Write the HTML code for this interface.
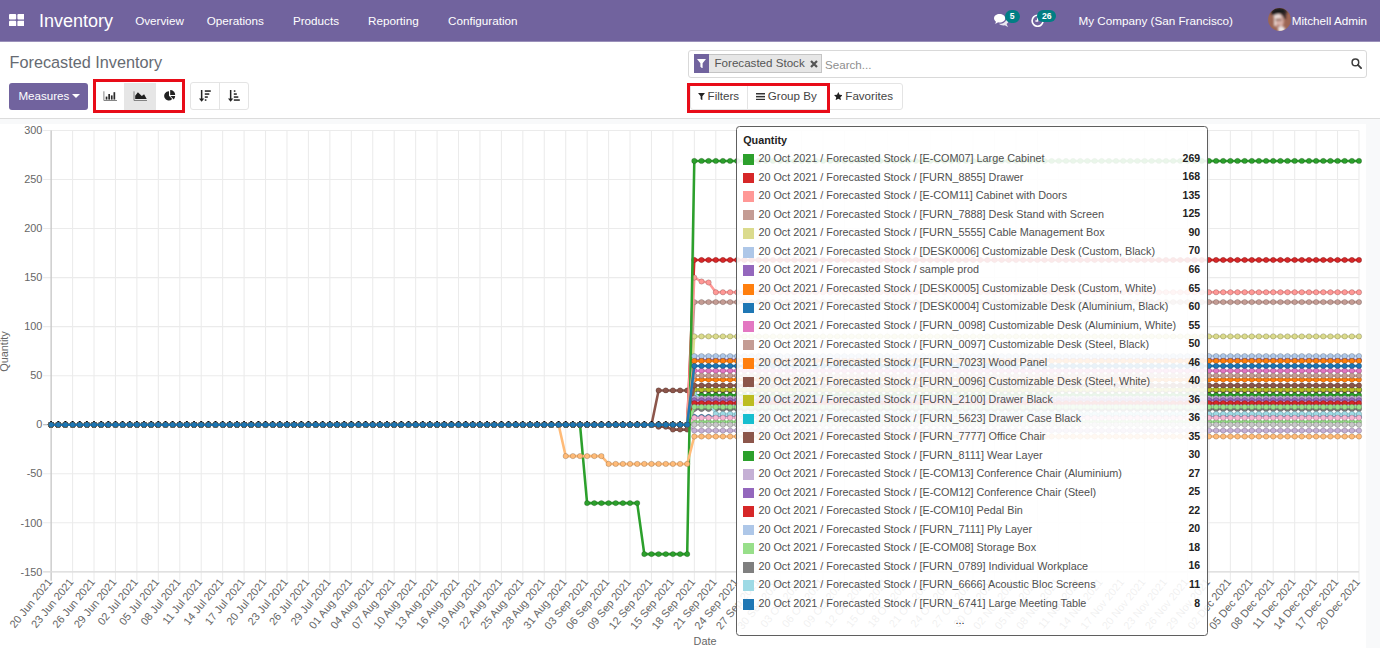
<!DOCTYPE html>
<html lang="en">
<head>
<meta charset="utf-8">
<title>Forecasted Inventory - Odoo</title>
<style>
*{box-sizing:border-box;margin:0;padding:0}
html,body{width:1380px;height:648px;overflow:hidden;background:#fff;font-family:"Liberation Sans",Arial,sans-serif;font-size:11.6px;color:#4c4c4c}
.abs{position:absolute}
#nav{position:absolute;left:0;top:0;width:1380px;height:41px;background:#71639e;box-shadow:0 1px 0 #9a90ba;color:#fff}
#nav .t{position:absolute;white-space:nowrap;line-height:14px;top:13.6px;font-size:11.7px;color:#fff}
#nav .brand{font-size:18px;top:10.8px;line-height:20px;left:39px}
.badge{position:absolute;background:#017e84;color:#fff;font-weight:bold;font-size:8.6px;line-height:13px;height:13px;border-radius:7px;text-align:center}
#cp{position:absolute;left:0;top:42px;width:1380px;height:76.5px;background:#fff;border-bottom:1px solid #dcdcdc}
#band{position:absolute;left:0;top:118.5px;width:1380px;height:5.5px;background:#f8f9fa}
#rstrip{position:absolute;left:1366px;top:118.5px;width:14px;height:530px;background:#f8f9fa}
.title{position:absolute;left:9.5px;top:53px;font-size:16.25px;line-height:18px;color:#666b72;white-space:nowrap}
.btnp{position:absolute;left:9.4px;top:82.5px;width:78.6px;height:27px;background:#71639e;border-radius:3px;color:#fff}
.btnp span{position:absolute;left:9px;top:6.3px;line-height:14px;white-space:nowrap}
.caret{position:absolute;left:62.8px;top:11.8px;width:0;height:0;border-left:4px solid transparent;border-right:4px solid transparent;border-top:4.4px solid #fff}
.redbox{position:absolute;border:3.5px solid #e80c18}
.grp{position:absolute;border:1px solid #e4e4e4;border-radius:3px;background:#fff}
.div{position:absolute;width:1px;background:#e4e4e4}
#search{position:absolute;left:688px;top:50px;width:678.8px;height:27.5px;border:1px solid #d9d9d9;border-radius:3px;background:#fff}
.facet{position:absolute;left:694px;top:53.6px;width:127.6px;height:19.8px;background:#e6e6e6;border:1px solid #c4c4c4}
.facet .ic{position:absolute;left:-1px;top:-1px;width:15.3px;height:19.8px;background:#71639e}
.facet .lb{position:absolute;left:19.5px;top:1.2px;line-height:14px;white-space:nowrap;color:#555}
.ph{position:absolute;left:825px;top:58.4px;line-height:14px;color:#8e8e8e;white-space:nowrap}
.bt{position:absolute;line-height:14px;white-space:nowrap;color:#444;top:89.4px}
#tt{position:absolute;left:736px;top:125.8px;width:471.5px;height:510.2px;border:1.2px solid #5f5f5f;border-radius:3.5px;background:rgba(255,255,255,0.9);color:#505050;font-size:10.82px}
.tt-title{position:absolute;left:6.2px;top:7.7px;font-weight:bold;color:#222;line-height:12px;font-size:10.8px}
.tt-row{position:absolute;left:0;width:100%;height:12px;line-height:12px;white-space:nowrap}
.tt-row .sq{position:absolute;left:6.2px;top:0.5px;width:10.8px;height:10.6px}
.tt-row .lb{position:absolute;left:21.4px;top:-1.6px}
.tt-row .vl{position:absolute;right:6.4px;top:-2px;font-size:10.5px;font-weight:bold;color:#222}
.tt-more{position:absolute;left:0;width:446px;text-align:center;top:487.5px;line-height:12px;color:#222}
</style>
</head>
<body>
<svg id="chart" width="1380" height="648" viewBox="0 0 1380 648" style="position:absolute;left:0;top:0">
<g stroke="#ebebeb" stroke-width="1.05">
<line x1="72.58" y1="130.4" x2="72.58" y2="580.7"/>
<line x1="94.02" y1="130.4" x2="94.02" y2="580.7"/>
<line x1="115.46" y1="130.4" x2="115.46" y2="580.7"/>
<line x1="136.90" y1="130.4" x2="136.90" y2="580.7"/>
<line x1="158.34" y1="130.4" x2="158.34" y2="580.7"/>
<line x1="179.78" y1="130.4" x2="179.78" y2="580.7"/>
<line x1="201.22" y1="130.4" x2="201.22" y2="580.7"/>
<line x1="222.66" y1="130.4" x2="222.66" y2="580.7"/>
<line x1="244.10" y1="130.4" x2="244.10" y2="580.7"/>
<line x1="265.54" y1="130.4" x2="265.54" y2="580.7"/>
<line x1="286.98" y1="130.4" x2="286.98" y2="580.7"/>
<line x1="308.42" y1="130.4" x2="308.42" y2="580.7"/>
<line x1="329.86" y1="130.4" x2="329.86" y2="580.7"/>
<line x1="351.30" y1="130.4" x2="351.30" y2="580.7"/>
<line x1="372.74" y1="130.4" x2="372.74" y2="580.7"/>
<line x1="394.19" y1="130.4" x2="394.19" y2="580.7"/>
<line x1="415.63" y1="130.4" x2="415.63" y2="580.7"/>
<line x1="437.07" y1="130.4" x2="437.07" y2="580.7"/>
<line x1="458.51" y1="130.4" x2="458.51" y2="580.7"/>
<line x1="479.95" y1="130.4" x2="479.95" y2="580.7"/>
<line x1="501.39" y1="130.4" x2="501.39" y2="580.7"/>
<line x1="522.83" y1="130.4" x2="522.83" y2="580.7"/>
<line x1="544.27" y1="130.4" x2="544.27" y2="580.7"/>
<line x1="565.71" y1="130.4" x2="565.71" y2="580.7"/>
<line x1="587.15" y1="130.4" x2="587.15" y2="580.7"/>
<line x1="608.59" y1="130.4" x2="608.59" y2="580.7"/>
<line x1="630.03" y1="130.4" x2="630.03" y2="580.7"/>
<line x1="651.47" y1="130.4" x2="651.47" y2="580.7"/>
<line x1="672.91" y1="130.4" x2="672.91" y2="580.7"/>
<line x1="694.35" y1="130.4" x2="694.35" y2="580.7"/>
<line x1="715.79" y1="130.4" x2="715.79" y2="580.7"/>
<line x1="737.23" y1="130.4" x2="737.23" y2="580.7"/>
<line x1="758.67" y1="130.4" x2="758.67" y2="580.7"/>
<line x1="780.11" y1="130.4" x2="780.11" y2="580.7"/>
<line x1="801.55" y1="130.4" x2="801.55" y2="580.7"/>
<line x1="822.99" y1="130.4" x2="822.99" y2="580.7"/>
<line x1="844.43" y1="130.4" x2="844.43" y2="580.7"/>
<line x1="865.87" y1="130.4" x2="865.87" y2="580.7"/>
<line x1="887.31" y1="130.4" x2="887.31" y2="580.7"/>
<line x1="908.75" y1="130.4" x2="908.75" y2="580.7"/>
<line x1="930.19" y1="130.4" x2="930.19" y2="580.7"/>
<line x1="951.63" y1="130.4" x2="951.63" y2="580.7"/>
<line x1="973.07" y1="130.4" x2="973.07" y2="580.7"/>
<line x1="994.51" y1="130.4" x2="994.51" y2="580.7"/>
<line x1="1015.95" y1="130.4" x2="1015.95" y2="580.7"/>
<line x1="1037.40" y1="130.4" x2="1037.40" y2="580.7"/>
<line x1="1058.84" y1="130.4" x2="1058.84" y2="580.7"/>
<line x1="1080.28" y1="130.4" x2="1080.28" y2="580.7"/>
<line x1="1101.72" y1="130.4" x2="1101.72" y2="580.7"/>
<line x1="1123.16" y1="130.4" x2="1123.16" y2="580.7"/>
<line x1="1144.60" y1="130.4" x2="1144.60" y2="580.7"/>
<line x1="1166.04" y1="130.4" x2="1166.04" y2="580.7"/>
<line x1="1187.48" y1="130.4" x2="1187.48" y2="580.7"/>
<line x1="1208.92" y1="130.4" x2="1208.92" y2="580.7"/>
<line x1="1230.36" y1="130.4" x2="1230.36" y2="580.7"/>
<line x1="1251.80" y1="130.4" x2="1251.80" y2="580.7"/>
<line x1="1273.24" y1="130.4" x2="1273.24" y2="580.7"/>
<line x1="1294.68" y1="130.4" x2="1294.68" y2="580.7"/>
<line x1="1316.12" y1="130.4" x2="1316.12" y2="580.7"/>
<line x1="1337.56" y1="130.4" x2="1337.56" y2="580.7"/>
<line x1="1359.00" y1="130.4" x2="1359.00" y2="580.7"/>
<line x1="43.1" y1="571.79" x2="1359.00" y2="571.79"/>
<line x1="43.1" y1="522.76" x2="1359.00" y2="522.76"/>
<line x1="43.1" y1="473.73" x2="1359.00" y2="473.73"/>
<line x1="43.1" y1="424.70" x2="1359.00" y2="424.70"/>
<line x1="43.1" y1="375.67" x2="1359.00" y2="375.67"/>
<line x1="43.1" y1="326.64" x2="1359.00" y2="326.64"/>
<line x1="43.1" y1="277.61" x2="1359.00" y2="277.61"/>
<line x1="43.1" y1="228.58" x2="1359.00" y2="228.58"/>
<line x1="43.1" y1="179.55" x2="1359.00" y2="179.55"/>
<line x1="43.1" y1="130.52" x2="1359.00" y2="130.52"/>
</g>
<line x1="51.14" y1="130.4" x2="51.14" y2="580.7" stroke="#c9c9c9" stroke-width="1.4"/>
<line x1="43.1" y1="571.79" x2="1359.00" y2="571.79" stroke="#dcdcdc" stroke-width="1.2"/>
<line x1="43.1" y1="424.70" x2="1359.00" y2="424.70" stroke="#c4c4c4" stroke-width="1.2"/>
<g font-family="Liberation Sans, Arial, sans-serif" font-size="10.9" fill="#666" text-anchor="end">
<text x="42.4" y="575.5">-150</text>
<text x="42.4" y="526.5">-100</text>
<text x="42.4" y="477.4">-50</text>
<text x="42.4" y="428.4">0</text>
<text x="42.4" y="379.4">50</text>
<text x="42.4" y="330.3">100</text>
<text x="42.4" y="281.3">150</text>
<text x="42.4" y="232.3">200</text>
<text x="42.4" y="183.2">250</text>
<text x="42.4" y="134.2">300</text>
</g>
<g font-family="Liberation Sans, Arial, sans-serif" font-size="10.9" fill="#666" text-anchor="end">
<text transform="translate(52.74,582.40) rotate(-50.6)">20 Jun 2021</text>
<text transform="translate(74.18,582.40) rotate(-50.6)">23 Jun 2021</text>
<text transform="translate(95.62,582.40) rotate(-50.6)">26 Jun 2021</text>
<text transform="translate(117.06,582.40) rotate(-50.6)">29 Jun 2021</text>
<text transform="translate(138.50,582.40) rotate(-50.6)">02 Jul 2021</text>
<text transform="translate(159.94,582.40) rotate(-50.6)">05 Jul 2021</text>
<text transform="translate(181.38,582.40) rotate(-50.6)">08 Jul 2021</text>
<text transform="translate(202.82,582.40) rotate(-50.6)">11 Jul 2021</text>
<text transform="translate(224.26,582.40) rotate(-50.6)">14 Jul 2021</text>
<text transform="translate(245.70,582.40) rotate(-50.6)">17 Jul 2021</text>
<text transform="translate(267.14,582.40) rotate(-50.6)">20 Jul 2021</text>
<text transform="translate(288.58,582.40) rotate(-50.6)">23 Jul 2021</text>
<text transform="translate(310.02,582.40) rotate(-50.6)">26 Jul 2021</text>
<text transform="translate(331.46,582.40) rotate(-50.6)">29 Jul 2021</text>
<text transform="translate(352.90,582.40) rotate(-50.6)">01 Aug 2021</text>
<text transform="translate(374.34,582.40) rotate(-50.6)">04 Aug 2021</text>
<text transform="translate(395.79,582.40) rotate(-50.6)">07 Aug 2021</text>
<text transform="translate(417.23,582.40) rotate(-50.6)">10 Aug 2021</text>
<text transform="translate(438.67,582.40) rotate(-50.6)">13 Aug 2021</text>
<text transform="translate(460.11,582.40) rotate(-50.6)">16 Aug 2021</text>
<text transform="translate(481.55,582.40) rotate(-50.6)">19 Aug 2021</text>
<text transform="translate(502.99,582.40) rotate(-50.6)">22 Aug 2021</text>
<text transform="translate(524.43,582.40) rotate(-50.6)">25 Aug 2021</text>
<text transform="translate(545.87,582.40) rotate(-50.6)">28 Aug 2021</text>
<text transform="translate(567.31,582.40) rotate(-50.6)">31 Aug 2021</text>
<text transform="translate(588.75,582.40) rotate(-50.6)">03 Sep 2021</text>
<text transform="translate(610.19,582.40) rotate(-50.6)">06 Sep 2021</text>
<text transform="translate(631.63,582.40) rotate(-50.6)">09 Sep 2021</text>
<text transform="translate(653.07,582.40) rotate(-50.6)">12 Sep 2021</text>
<text transform="translate(674.51,582.40) rotate(-50.6)">15 Sep 2021</text>
<text transform="translate(695.95,582.40) rotate(-50.6)">18 Sep 2021</text>
<text transform="translate(717.39,582.40) rotate(-50.6)">21 Sep 2021</text>
<text transform="translate(738.83,582.40) rotate(-50.6)">24 Sep 2021</text>
<text transform="translate(760.27,582.40) rotate(-50.6)">27 Sep 2021</text>
<text transform="translate(781.71,582.40) rotate(-50.6)">30 Sep 2021</text>
<text transform="translate(803.15,582.40) rotate(-50.6)">03 Oct 2021</text>
<text transform="translate(824.59,582.40) rotate(-50.6)">06 Oct 2021</text>
<text transform="translate(846.03,582.40) rotate(-50.6)">09 Oct 2021</text>
<text transform="translate(867.47,582.40) rotate(-50.6)">12 Oct 2021</text>
<text transform="translate(888.91,582.40) rotate(-50.6)">15 Oct 2021</text>
<text transform="translate(910.35,582.40) rotate(-50.6)">18 Oct 2021</text>
<text transform="translate(931.79,582.40) rotate(-50.6)">21 Oct 2021</text>
<text transform="translate(953.23,582.40) rotate(-50.6)">24 Oct 2021</text>
<text transform="translate(974.67,582.40) rotate(-50.6)">27 Oct 2021</text>
<text transform="translate(996.11,582.40) rotate(-50.6)">30 Oct 2021</text>
<text transform="translate(1017.55,582.40) rotate(-50.6)">02 Nov 2021</text>
<text transform="translate(1039.00,582.40) rotate(-50.6)">05 Nov 2021</text>
<text transform="translate(1060.44,582.40) rotate(-50.6)">08 Nov 2021</text>
<text transform="translate(1081.88,582.40) rotate(-50.6)">11 Nov 2021</text>
<text transform="translate(1103.32,582.40) rotate(-50.6)">14 Nov 2021</text>
<text transform="translate(1124.76,582.40) rotate(-50.6)">17 Nov 2021</text>
<text transform="translate(1146.20,582.40) rotate(-50.6)">20 Nov 2021</text>
<text transform="translate(1167.64,582.40) rotate(-50.6)">23 Nov 2021</text>
<text transform="translate(1189.08,582.40) rotate(-50.6)">26 Nov 2021</text>
<text transform="translate(1210.52,582.40) rotate(-50.6)">29 Nov 2021</text>
<text transform="translate(1231.96,582.40) rotate(-50.6)">02 Dec 2021</text>
<text transform="translate(1253.40,582.40) rotate(-50.6)">05 Dec 2021</text>
<text transform="translate(1274.84,582.40) rotate(-50.6)">08 Dec 2021</text>
<text transform="translate(1296.28,582.40) rotate(-50.6)">11 Dec 2021</text>
<text transform="translate(1317.72,582.40) rotate(-50.6)">14 Dec 2021</text>
<text transform="translate(1339.16,582.40) rotate(-50.6)">17 Dec 2021</text>
<text transform="translate(1360.60,582.40) rotate(-50.6)">20 Dec 2021</text>
</g>
<text font-family="Liberation Sans, Arial, sans-serif" font-size="10.9" fill="#666" text-anchor="middle" transform="translate(7.6,351.5) rotate(-90)">Quantity</text>
<text font-family="Liberation Sans, Arial, sans-serif" font-size="10.85" fill="#666" text-anchor="middle" x="705" y="645.2">Date</text>
<defs>
<marker id="m0" markerUnits="userSpaceOnUse" markerWidth="8" markerHeight="8" refX="4" refY="4" viewBox="0 0 8 8"><circle cx="4" cy="4" r="2.68" fill="#1f77b4" stroke="rgba(0,0,0,0.2)" stroke-width="0.9"/></marker>
<marker id="m1" markerUnits="userSpaceOnUse" markerWidth="8" markerHeight="8" refX="4" refY="4" viewBox="0 0 8 8"><circle cx="4" cy="4" r="2.68" fill="#ff7f0e" stroke="rgba(0,0,0,0.2)" stroke-width="0.9"/></marker>
<marker id="m2" markerUnits="userSpaceOnUse" markerWidth="8" markerHeight="8" refX="4" refY="4" viewBox="0 0 8 8"><circle cx="4" cy="4" r="2.68" fill="#aec7e8" stroke="rgba(0,0,0,0.2)" stroke-width="0.9"/></marker>
<marker id="m3" markerUnits="userSpaceOnUse" markerWidth="8" markerHeight="8" refX="4" refY="4" viewBox="0 0 8 8"><circle cx="4" cy="4" r="2.68" fill="#ffbb78" stroke="rgba(0,0,0,0.2)" stroke-width="0.9"/></marker>
<marker id="m4" markerUnits="userSpaceOnUse" markerWidth="8" markerHeight="8" refX="4" refY="4" viewBox="0 0 8 8"><circle cx="4" cy="4" r="2.68" fill="#2ca02c" stroke="rgba(0,0,0,0.2)" stroke-width="0.9"/></marker>
<marker id="m5" markerUnits="userSpaceOnUse" markerWidth="8" markerHeight="8" refX="4" refY="4" viewBox="0 0 8 8"><circle cx="4" cy="4" r="2.68" fill="#98df8a" stroke="rgba(0,0,0,0.2)" stroke-width="0.9"/></marker>
<marker id="m6" markerUnits="userSpaceOnUse" markerWidth="8" markerHeight="8" refX="4" refY="4" viewBox="0 0 8 8"><circle cx="4" cy="4" r="2.68" fill="#d62728" stroke="rgba(0,0,0,0.2)" stroke-width="0.9"/></marker>
<marker id="m7" markerUnits="userSpaceOnUse" markerWidth="8" markerHeight="8" refX="4" refY="4" viewBox="0 0 8 8"><circle cx="4" cy="4" r="2.68" fill="#ff9896" stroke="rgba(0,0,0,0.2)" stroke-width="0.9"/></marker>
<marker id="m8" markerUnits="userSpaceOnUse" markerWidth="8" markerHeight="8" refX="4" refY="4" viewBox="0 0 8 8"><circle cx="4" cy="4" r="2.68" fill="#9467bd" stroke="rgba(0,0,0,0.2)" stroke-width="0.9"/></marker>
<marker id="m9" markerUnits="userSpaceOnUse" markerWidth="8" markerHeight="8" refX="4" refY="4" viewBox="0 0 8 8"><circle cx="4" cy="4" r="2.68" fill="#c5b0d5" stroke="rgba(0,0,0,0.2)" stroke-width="0.9"/></marker>
<marker id="m10" markerUnits="userSpaceOnUse" markerWidth="8" markerHeight="8" refX="4" refY="4" viewBox="0 0 8 8"><circle cx="4" cy="4" r="2.68" fill="#8c564b" stroke="rgba(0,0,0,0.2)" stroke-width="0.9"/></marker>
<marker id="m11" markerUnits="userSpaceOnUse" markerWidth="8" markerHeight="8" refX="4" refY="4" viewBox="0 0 8 8"><circle cx="4" cy="4" r="2.68" fill="#c49c94" stroke="rgba(0,0,0,0.2)" stroke-width="0.9"/></marker>
<marker id="m12" markerUnits="userSpaceOnUse" markerWidth="8" markerHeight="8" refX="4" refY="4" viewBox="0 0 8 8"><circle cx="4" cy="4" r="2.68" fill="#e377c2" stroke="rgba(0,0,0,0.2)" stroke-width="0.9"/></marker>
<marker id="m13" markerUnits="userSpaceOnUse" markerWidth="8" markerHeight="8" refX="4" refY="4" viewBox="0 0 8 8"><circle cx="4" cy="4" r="2.68" fill="#f7b6d2" stroke="rgba(0,0,0,0.2)" stroke-width="0.9"/></marker>
<marker id="m14" markerUnits="userSpaceOnUse" markerWidth="8" markerHeight="8" refX="4" refY="4" viewBox="0 0 8 8"><circle cx="4" cy="4" r="2.68" fill="#7f7f7f" stroke="rgba(0,0,0,0.2)" stroke-width="0.9"/></marker>
<marker id="m15" markerUnits="userSpaceOnUse" markerWidth="8" markerHeight="8" refX="4" refY="4" viewBox="0 0 8 8"><circle cx="4" cy="4" r="2.68" fill="#c7c7c7" stroke="rgba(0,0,0,0.2)" stroke-width="0.9"/></marker>
<marker id="m16" markerUnits="userSpaceOnUse" markerWidth="8" markerHeight="8" refX="4" refY="4" viewBox="0 0 8 8"><circle cx="4" cy="4" r="2.68" fill="#bcbd22" stroke="rgba(0,0,0,0.2)" stroke-width="0.9"/></marker>
<marker id="m17" markerUnits="userSpaceOnUse" markerWidth="8" markerHeight="8" refX="4" refY="4" viewBox="0 0 8 8"><circle cx="4" cy="4" r="2.68" fill="#dbdb8d" stroke="rgba(0,0,0,0.2)" stroke-width="0.9"/></marker>
<marker id="m18" markerUnits="userSpaceOnUse" markerWidth="8" markerHeight="8" refX="4" refY="4" viewBox="0 0 8 8"><circle cx="4" cy="4" r="2.68" fill="#17becf" stroke="rgba(0,0,0,0.2)" stroke-width="0.9"/></marker>
<marker id="m19" markerUnits="userSpaceOnUse" markerWidth="8" markerHeight="8" refX="4" refY="4" viewBox="0 0 8 8"><circle cx="4" cy="4" r="2.68" fill="#9edae5" stroke="rgba(0,0,0,0.2)" stroke-width="0.9"/></marker>
</defs>
<polyline points="51.1,424.7 58.3,424.7 65.4,424.7 72.6,424.7 79.7,424.7 86.9,424.7 94,424.7 101.2,424.7 108.3,424.7 115.5,424.7 122.6,424.7 129.8,424.7 136.9,424.7 144,424.7 151.2,424.7 158.3,424.7 165.5,424.7 172.6,424.7 179.8,424.7 186.9,424.7 194.1,424.7 201.2,424.7 208.4,424.7 215.5,424.7 222.7,424.7 229.8,424.7 237,424.7 244.1,424.7 251.2,424.7 258.4,424.7 265.5,424.7 272.7,424.7 279.8,424.7 287,424.7 294.1,424.7 301.3,424.7 308.4,424.7 315.6,424.7 322.7,424.7 329.9,424.7 337,424.7 344.2,424.7 351.3,424.7 358.5,424.7 365.6,424.7 372.7,424.7 379.9,424.7 387,424.7 394.2,424.7 401.3,424.7 408.5,424.7 415.6,424.7 422.8,424.7 429.9,424.7 437.1,424.7 444.2,424.7 451.4,424.7 458.5,424.7 465.7,424.7 472.8,424.7 479.9,424.7 487.1,424.7 494.2,424.7 501.4,424.7 508.5,424.7 515.7,424.7 522.8,424.7 530,424.7 537.1,424.7 544.3,424.7 551.4,424.7 558.6,424.7 565.7,424.7 572.9,424.7 580,424.7 587.1,424.7 594.3,424.7 601.4,424.7 608.6,424.7 615.7,424.7 622.9,424.7 630,424.7 637.2,424.7 644.3,424.7 651.5,424.7 658.6,424.7 665.8,424.7 672.9,424.7 680.1,424.7 687.2,424.7 694.3,409 701.5,409 708.6,409 715.8,409 722.9,409 730.1,409 737.2,409 744.4,409 751.5,409 758.7,409 765.8,409 773,409 780.1,409 787.3,409 794.4,409 801.6,409 808.7,409 815.8,409 823,409 830.1,409 837.3,409 844.4,409 851.6,409 858.7,409 865.9,409 873,409 880.2,409 887.3,409 894.5,409 901.6,409 908.8,409 915.9,409 923,409 930.2,409 937.3,409 944.5,409 951.6,409 958.8,409 965.9,409 973.1,409 980.2,409 987.4,409 994.5,409 1001.7,409 1008.8,409 1016,409 1023.1,409 1030.2,409 1037.4,409 1044.5,409 1051.7,409 1058.8,409 1066,409 1073.1,409 1080.3,409 1087.4,409 1094.6,409 1101.7,409 1108.9,409 1116,409 1123.2,409 1130.3,409 1137.4,409 1144.6,409 1151.7,409 1158.9,409 1166,409 1173.2,409 1180.3,409 1187.5,409 1194.6,409 1201.8,409 1208.9,409 1216.1,409 1223.2,409 1230.4,409 1237.5,409 1244.7,409 1251.8,409 1258.9,409 1266.1,409 1273.2,409 1280.4,409 1287.5,409 1294.7,409 1301.8,409 1309,409 1316.1,409 1323.3,409 1330.4,409 1337.6,409 1344.7,409 1351.9,409 1359,409" fill="none" stroke="#7f7f7f" stroke-width="2.55" stroke-linejoin="round" marker-start="url(#m14)" marker-mid="url(#m14)" marker-end="url(#m14)"/>
<polyline points="51.1,424.7 58.3,424.7 65.4,424.7 72.6,424.7 79.7,424.7 86.9,424.7 94,424.7 101.2,424.7 108.3,424.7 115.5,424.7 122.6,424.7 129.8,424.7 136.9,424.7 144,424.7 151.2,424.7 158.3,424.7 165.5,424.7 172.6,424.7 179.8,424.7 186.9,424.7 194.1,424.7 201.2,424.7 208.4,424.7 215.5,424.7 222.7,424.7 229.8,424.7 237,424.7 244.1,424.7 251.2,424.7 258.4,424.7 265.5,424.7 272.7,424.7 279.8,424.7 287,424.7 294.1,424.7 301.3,424.7 308.4,424.7 315.6,424.7 322.7,424.7 329.9,424.7 337,424.7 344.2,424.7 351.3,424.7 358.5,424.7 365.6,424.7 372.7,424.7 379.9,424.7 387,424.7 394.2,424.7 401.3,424.7 408.5,424.7 415.6,424.7 422.8,424.7 429.9,424.7 437.1,424.7 444.2,424.7 451.4,424.7 458.5,424.7 465.7,424.7 472.8,424.7 479.9,424.7 487.1,424.7 494.2,424.7 501.4,424.7 508.5,424.7 515.7,424.7 522.8,424.7 530,424.7 537.1,424.7 544.3,424.7 551.4,424.7 558.6,424.7 565.7,424.7 572.9,424.7 580,424.7 587.1,424.7 594.3,424.7 601.4,424.7 608.6,424.7 615.7,424.7 622.9,424.7 630,424.7 637.2,424.7 644.3,424.7 651.5,424.7 658.6,424.7 665.8,424.7 672.9,424.7 680.1,424.7 687.2,424.7 694.3,302.1 701.5,302.1 708.6,302.1 715.8,302.1 722.9,302.1 730.1,302.1 737.2,302.1 744.4,302.1 751.5,302.1 758.7,302.1 765.8,302.1 773,302.1 780.1,302.1 787.3,302.1 794.4,302.1 801.6,302.1 808.7,302.1 815.8,302.1 823,302.1 830.1,302.1 837.3,302.1 844.4,302.1 851.6,302.1 858.7,302.1 865.9,302.1 873,302.1 880.2,302.1 887.3,302.1 894.5,302.1 901.6,302.1 908.8,302.1 915.9,302.1 923,302.1 930.2,302.1 937.3,302.1 944.5,302.1 951.6,302.1 958.8,302.1 965.9,302.1 973.1,302.1 980.2,302.1 987.4,302.1 994.5,302.1 1001.7,302.1 1008.8,302.1 1016,302.1 1023.1,302.1 1030.2,302.1 1037.4,302.1 1044.5,302.1 1051.7,302.1 1058.8,302.1 1066,302.1 1073.1,302.1 1080.3,302.1 1087.4,302.1 1094.6,302.1 1101.7,302.1 1108.9,302.1 1116,302.1 1123.2,302.1 1130.3,302.1 1137.4,302.1 1144.6,302.1 1151.7,302.1 1158.9,302.1 1166,302.1 1173.2,302.1 1180.3,302.1 1187.5,302.1 1194.6,302.1 1201.8,302.1 1208.9,302.1 1216.1,302.1 1223.2,302.1 1230.4,302.1 1237.5,302.1 1244.7,302.1 1251.8,302.1 1258.9,302.1 1266.1,302.1 1273.2,302.1 1280.4,302.1 1287.5,302.1 1294.7,302.1 1301.8,302.1 1309,302.1 1316.1,302.1 1323.3,302.1 1330.4,302.1 1337.6,302.1 1344.7,302.1 1351.9,302.1 1359,302.1" fill="none" stroke="#c49c94" stroke-width="2.55" stroke-linejoin="round" marker-start="url(#m11)" marker-mid="url(#m11)" marker-end="url(#m11)"/>
<polyline points="51.1,424.7 58.3,424.7 65.4,424.7 72.6,424.7 79.7,424.7 86.9,424.7 94,424.7 101.2,424.7 108.3,424.7 115.5,424.7 122.6,424.7 129.8,424.7 136.9,424.7 144,424.7 151.2,424.7 158.3,424.7 165.5,424.7 172.6,424.7 179.8,424.7 186.9,424.7 194.1,424.7 201.2,424.7 208.4,424.7 215.5,424.7 222.7,424.7 229.8,424.7 237,424.7 244.1,424.7 251.2,424.7 258.4,424.7 265.5,424.7 272.7,424.7 279.8,424.7 287,424.7 294.1,424.7 301.3,424.7 308.4,424.7 315.6,424.7 322.7,424.7 329.9,424.7 337,424.7 344.2,424.7 351.3,424.7 358.5,424.7 365.6,424.7 372.7,424.7 379.9,424.7 387,424.7 394.2,424.7 401.3,424.7 408.5,424.7 415.6,424.7 422.8,424.7 429.9,424.7 437.1,424.7 444.2,424.7 451.4,424.7 458.5,424.7 465.7,424.7 472.8,424.7 479.9,424.7 487.1,424.7 494.2,424.7 501.4,424.7 508.5,424.7 515.7,424.7 522.8,424.7 530,424.7 537.1,424.7 544.3,424.7 551.4,424.7 558.6,424.7 565.7,424.7 572.9,424.7 580,424.7 587.1,424.7 594.3,424.7 601.4,424.7 608.6,424.7 615.7,424.7 622.9,424.7 630,424.7 637.2,424.7 644.3,424.7 651.5,424.7 658.6,390.4 665.8,390.4 672.9,390.4 680.1,390.4 687.2,390.4 694.3,390.4 701.5,390.4 708.6,390.4 715.8,390.4 722.9,390.4 730.1,390.4 737.2,390.4 744.4,390.4 751.5,390.4 758.7,390.4 765.8,390.4 773,390.4 780.1,390.4 787.3,390.4 794.4,390.4 801.6,390.4 808.7,390.4 815.8,390.4 823,390.4 830.1,390.4 837.3,390.4 844.4,390.4 851.6,390.4 858.7,390.4 865.9,390.4 873,390.4 880.2,390.4 887.3,390.4 894.5,390.4 901.6,390.4 908.8,390.4 915.9,390.4 923,390.4 930.2,390.4 937.3,390.4 944.5,390.4 951.6,390.4 958.8,390.4 965.9,390.4 973.1,390.4 980.2,390.4 987.4,390.4 994.5,390.4 1001.7,390.4 1008.8,390.4 1016,390.4 1023.1,390.4 1030.2,390.4 1037.4,390.4 1044.5,390.4 1051.7,390.4 1058.8,390.4 1066,390.4 1073.1,390.4 1080.3,390.4 1087.4,390.4 1094.6,390.4 1101.7,390.4 1108.9,390.4 1116,390.4 1123.2,390.4 1130.3,390.4 1137.4,390.4 1144.6,390.4 1151.7,390.4 1158.9,390.4 1166,390.4 1173.2,390.4 1180.3,390.4 1187.5,390.4 1194.6,390.4 1201.8,390.4 1208.9,390.4 1216.1,390.4 1223.2,390.4 1230.4,390.4 1237.5,390.4 1244.7,390.4 1251.8,390.4 1258.9,390.4 1266.1,390.4 1273.2,390.4 1280.4,390.4 1287.5,390.4 1294.7,390.4 1301.8,390.4 1309,390.4 1316.1,390.4 1323.3,390.4 1330.4,390.4 1337.6,390.4 1344.7,390.4 1351.9,390.4 1359,390.4" fill="none" stroke="#8c564b" stroke-width="2.55" stroke-linejoin="round" marker-start="url(#m10)" marker-mid="url(#m10)" marker-end="url(#m10)"/>
<polyline points="51.1,424.7 58.3,424.7 65.4,424.7 72.6,424.7 79.7,424.7 86.9,424.7 94,424.7 101.2,424.7 108.3,424.7 115.5,424.7 122.6,424.7 129.8,424.7 136.9,424.7 144,424.7 151.2,424.7 158.3,424.7 165.5,424.7 172.6,424.7 179.8,424.7 186.9,424.7 194.1,424.7 201.2,424.7 208.4,424.7 215.5,424.7 222.7,424.7 229.8,424.7 237,424.7 244.1,424.7 251.2,424.7 258.4,424.7 265.5,424.7 272.7,424.7 279.8,424.7 287,424.7 294.1,424.7 301.3,424.7 308.4,424.7 315.6,424.7 322.7,424.7 329.9,424.7 337,424.7 344.2,424.7 351.3,424.7 358.5,424.7 365.6,424.7 372.7,424.7 379.9,424.7 387,424.7 394.2,424.7 401.3,424.7 408.5,424.7 415.6,424.7 422.8,424.7 429.9,424.7 437.1,424.7 444.2,424.7 451.4,424.7 458.5,424.7 465.7,424.7 472.8,424.7 479.9,424.7 487.1,424.7 494.2,424.7 501.4,424.7 508.5,424.7 515.7,424.7 522.8,424.7 530,424.7 537.1,424.7 544.3,424.7 551.4,424.7 558.6,424.7 565.7,424.7 572.9,424.7 580,424.7 587.1,424.7 594.3,424.7 601.4,424.7 608.6,424.7 615.7,424.7 622.9,424.7 630,424.7 637.2,424.7 644.3,424.7 651.5,424.7 658.6,424.7 665.8,424.7 672.9,424.7 680.1,424.7 687.2,424.7 694.3,430.6 701.5,430.6 708.6,430.6 715.8,430.6 722.9,430.6 730.1,430.6 737.2,430.6 744.4,430.6 751.5,430.6 758.7,430.6 765.8,430.6 773,430.6 780.1,430.6 787.3,430.6 794.4,430.6 801.6,430.6 808.7,430.6 815.8,430.6 823,430.6 830.1,430.6 837.3,430.6 844.4,430.6 851.6,430.6 858.7,430.6 865.9,430.6 873,430.6 880.2,430.6 887.3,430.6 894.5,430.6 901.6,430.6 908.8,430.6 915.9,430.6 923,430.6 930.2,430.6 937.3,430.6 944.5,430.6 951.6,430.6 958.8,430.6 965.9,430.6 973.1,430.6 980.2,430.6 987.4,430.6 994.5,430.6 1001.7,430.6 1008.8,430.6 1016,430.6 1023.1,430.6 1030.2,430.6 1037.4,430.6 1044.5,430.6 1051.7,430.6 1058.8,430.6 1066,430.6 1073.1,430.6 1080.3,430.6 1087.4,430.6 1094.6,430.6 1101.7,430.6 1108.9,430.6 1116,430.6 1123.2,430.6 1130.3,430.6 1137.4,430.6 1144.6,430.6 1151.7,430.6 1158.9,430.6 1166,430.6 1173.2,430.6 1180.3,430.6 1187.5,430.6 1194.6,430.6 1201.8,430.6 1208.9,430.6 1216.1,430.6 1223.2,430.6 1230.4,430.6 1237.5,430.6 1244.7,430.6 1251.8,430.6 1258.9,430.6 1266.1,430.6 1273.2,430.6 1280.4,430.6 1287.5,430.6 1294.7,430.6 1301.8,430.6 1309,430.6 1316.1,430.6 1323.3,430.6 1330.4,430.6 1337.6,430.6 1344.7,430.6 1351.9,430.6 1359,430.6" fill="none" stroke="#c5b0d5" stroke-width="2.55" stroke-linejoin="round" marker-start="url(#m9)" marker-mid="url(#m9)" marker-end="url(#m9)"/>
<polyline points="51.1,424.7 58.3,424.7 65.4,424.7 72.6,424.7 79.7,424.7 86.9,424.7 94,424.7 101.2,424.7 108.3,424.7 115.5,424.7 122.6,424.7 129.8,424.7 136.9,424.7 144,424.7 151.2,424.7 158.3,424.7 165.5,424.7 172.6,424.7 179.8,424.7 186.9,424.7 194.1,424.7 201.2,424.7 208.4,424.7 215.5,424.7 222.7,424.7 229.8,424.7 237,424.7 244.1,424.7 251.2,424.7 258.4,424.7 265.5,424.7 272.7,424.7 279.8,424.7 287,424.7 294.1,424.7 301.3,424.7 308.4,424.7 315.6,424.7 322.7,424.7 329.9,424.7 337,424.7 344.2,424.7 351.3,424.7 358.5,424.7 365.6,424.7 372.7,424.7 379.9,424.7 387,424.7 394.2,424.7 401.3,424.7 408.5,424.7 415.6,424.7 422.8,424.7 429.9,424.7 437.1,424.7 444.2,424.7 451.4,424.7 458.5,424.7 465.7,424.7 472.8,424.7 479.9,424.7 487.1,424.7 494.2,424.7 501.4,424.7 508.5,424.7 515.7,424.7 522.8,424.7 530,424.7 537.1,424.7 544.3,424.7 551.4,424.7 558.6,424.7 565.7,424.7 572.9,424.7 580,424.7 587.1,424.7 594.3,424.7 601.4,424.7 608.6,424.7 615.7,424.7 622.9,424.7 630,424.7 637.2,424.7 644.3,424.7 651.5,424.7 658.6,424.7 665.8,424.7 672.9,424.7 680.1,424.7 687.2,424.7 694.3,360 701.5,360 708.6,360 715.8,360 722.9,360 730.1,360 737.2,360 744.4,360 751.5,360 758.7,360 765.8,360 773,360 780.1,360 787.3,360 794.4,360 801.6,360 808.7,360 815.8,360 823,360 830.1,360 837.3,360 844.4,360 851.6,360 858.7,360 865.9,360 873,360 880.2,360 887.3,360 894.5,360 901.6,360 908.8,360 915.9,360 923,360 930.2,360 937.3,360 944.5,360 951.6,360 958.8,360 965.9,360 973.1,360 980.2,360 987.4,360 994.5,360 1001.7,360 1008.8,360 1016,360 1023.1,360 1030.2,360 1037.4,360 1044.5,360 1051.7,360 1058.8,360 1066,360 1073.1,360 1080.3,360 1087.4,360 1094.6,360 1101.7,360 1108.9,360 1116,360 1123.2,360 1130.3,360 1137.4,360 1144.6,360 1151.7,360 1158.9,360 1166,360 1173.2,360 1180.3,360 1187.5,360 1194.6,360 1201.8,360 1208.9,360 1216.1,360 1223.2,360 1230.4,360 1237.5,360 1244.7,360 1251.8,360 1258.9,360 1266.1,360 1273.2,360 1280.4,360 1287.5,360 1294.7,360 1301.8,360 1309,360 1316.1,360 1323.3,360 1330.4,360 1337.6,360 1344.7,360 1351.9,360 1359,360" fill="none" stroke="#9467bd" stroke-width="2.55" stroke-linejoin="round" marker-start="url(#m8)" marker-mid="url(#m8)" marker-end="url(#m8)"/>
<polyline points="51.1,424.7 58.3,424.7 65.4,424.7 72.6,424.7 79.7,424.7 86.9,424.7 94,424.7 101.2,424.7 108.3,424.7 115.5,424.7 122.6,424.7 129.8,424.7 136.9,424.7 144,424.7 151.2,424.7 158.3,424.7 165.5,424.7 172.6,424.7 179.8,424.7 186.9,424.7 194.1,424.7 201.2,424.7 208.4,424.7 215.5,424.7 222.7,424.7 229.8,424.7 237,424.7 244.1,424.7 251.2,424.7 258.4,424.7 265.5,424.7 272.7,424.7 279.8,424.7 287,424.7 294.1,424.7 301.3,424.7 308.4,424.7 315.6,424.7 322.7,424.7 329.9,424.7 337,424.7 344.2,424.7 351.3,424.7 358.5,424.7 365.6,424.7 372.7,424.7 379.9,424.7 387,424.7 394.2,424.7 401.3,424.7 408.5,424.7 415.6,424.7 422.8,424.7 429.9,424.7 437.1,424.7 444.2,424.7 451.4,424.7 458.5,424.7 465.7,424.7 472.8,424.7 479.9,424.7 487.1,424.7 494.2,424.7 501.4,424.7 508.5,424.7 515.7,424.7 522.8,424.7 530,424.7 537.1,424.7 544.3,424.7 551.4,424.7 558.6,424.7 565.7,424.7 572.9,424.7 580,424.7 587.1,424.7 594.3,424.7 601.4,424.7 608.6,424.7 615.7,424.7 622.9,424.7 630,424.7 637.2,424.7 644.3,424.7 651.5,424.7 658.6,424.7 665.8,424.7 672.9,424.7 680.1,424.7 687.2,424.7 694.3,260 701.5,260 708.6,260 715.8,260 722.9,260 730.1,260 737.2,260 744.4,260 751.5,260 758.7,260 765.8,260 773,260 780.1,260 787.3,260 794.4,260 801.6,260 808.7,260 815.8,260 823,260 830.1,260 837.3,260 844.4,260 851.6,260 858.7,260 865.9,260 873,260 880.2,260 887.3,260 894.5,260 901.6,260 908.8,260 915.9,260 923,260 930.2,260 937.3,260 944.5,260 951.6,260 958.8,260 965.9,260 973.1,260 980.2,260 987.4,260 994.5,260 1001.7,260 1008.8,260 1016,260 1023.1,260 1030.2,260 1037.4,260 1044.5,260 1051.7,260 1058.8,260 1066,260 1073.1,260 1080.3,260 1087.4,260 1094.6,260 1101.7,260 1108.9,260 1116,260 1123.2,260 1130.3,260 1137.4,260 1144.6,260 1151.7,260 1158.9,260 1166,260 1173.2,260 1180.3,260 1187.5,260 1194.6,260 1201.8,260 1208.9,260 1216.1,260 1223.2,260 1230.4,260 1237.5,260 1244.7,260 1251.8,260 1258.9,260 1266.1,260 1273.2,260 1280.4,260 1287.5,260 1294.7,260 1301.8,260 1309,260 1316.1,260 1323.3,260 1330.4,260 1337.6,260 1344.7,260 1351.9,260 1359,260" fill="none" stroke="#d62728" stroke-width="2.55" stroke-linejoin="round" marker-start="url(#m6)" marker-mid="url(#m6)" marker-end="url(#m6)"/>
<polyline points="51.1,424.7 58.3,424.7 65.4,424.7 72.6,424.7 79.7,424.7 86.9,424.7 94,424.7 101.2,424.7 108.3,424.7 115.5,424.7 122.6,424.7 129.8,424.7 136.9,424.7 144,424.7 151.2,424.7 158.3,424.7 165.5,424.7 172.6,424.7 179.8,424.7 186.9,424.7 194.1,424.7 201.2,424.7 208.4,424.7 215.5,424.7 222.7,424.7 229.8,424.7 237,424.7 244.1,424.7 251.2,424.7 258.4,424.7 265.5,424.7 272.7,424.7 279.8,424.7 287,424.7 294.1,424.7 301.3,424.7 308.4,424.7 315.6,424.7 322.7,424.7 329.9,424.7 337,424.7 344.2,424.7 351.3,424.7 358.5,424.7 365.6,424.7 372.7,424.7 379.9,424.7 387,424.7 394.2,424.7 401.3,424.7 408.5,424.7 415.6,424.7 422.8,424.7 429.9,424.7 437.1,424.7 444.2,424.7 451.4,424.7 458.5,424.7 465.7,424.7 472.8,424.7 479.9,424.7 487.1,424.7 494.2,424.7 501.4,424.7 508.5,424.7 515.7,424.7 522.8,424.7 530,424.7 537.1,424.7 544.3,424.7 551.4,424.7 558.6,424.7 565.7,424.7 572.9,424.7 580,424.7 587.1,424.7 594.3,424.7 601.4,424.7 608.6,424.7 615.7,424.7 622.9,424.7 630,424.7 637.2,424.7 644.3,424.7 651.5,424.7 658.6,424.7 665.8,424.7 672.9,424.7 680.1,424.7 687.2,424.7 694.3,421.8 701.5,421.8 708.6,421.8 715.8,421.8 722.9,421.8 730.1,421.8 737.2,421.8 744.4,421.8 751.5,421.8 758.7,421.8 765.8,421.8 773,421.8 780.1,421.8 787.3,421.8 794.4,421.8 801.6,421.8 808.7,421.8 815.8,421.8 823,421.8 830.1,421.8 837.3,421.8 844.4,421.8 851.6,421.8 858.7,421.8 865.9,421.8 873,421.8 880.2,421.8 887.3,421.8 894.5,421.8 901.6,421.8 908.8,421.8 915.9,421.8 923,421.8 930.2,421.8 937.3,421.8 944.5,421.8 951.6,421.8 958.8,421.8 965.9,421.8 973.1,421.8 980.2,421.8 987.4,421.8 994.5,421.8 1001.7,421.8 1008.8,421.8 1016,421.8 1023.1,421.8 1030.2,421.8 1037.4,421.8 1044.5,421.8 1051.7,421.8 1058.8,421.8 1066,421.8 1073.1,421.8 1080.3,421.8 1087.4,421.8 1094.6,421.8 1101.7,421.8 1108.9,421.8 1116,421.8 1123.2,421.8 1130.3,421.8 1137.4,421.8 1144.6,421.8 1151.7,421.8 1158.9,421.8 1166,421.8 1173.2,421.8 1180.3,421.8 1187.5,421.8 1194.6,421.8 1201.8,421.8 1208.9,421.8 1216.1,421.8 1223.2,421.8 1230.4,421.8 1237.5,421.8 1244.7,421.8 1251.8,421.8 1258.9,421.8 1266.1,421.8 1273.2,421.8 1280.4,421.8 1287.5,421.8 1294.7,421.8 1301.8,421.8 1309,421.8 1316.1,421.8 1323.3,421.8 1330.4,421.8 1337.6,421.8 1344.7,421.8 1351.9,421.8 1359,421.8" fill="none" stroke="#98df8a" stroke-width="2.55" stroke-linejoin="round" marker-start="url(#m5)" marker-mid="url(#m5)" marker-end="url(#m5)"/>
<polyline points="51.1,424.7 58.3,424.7 65.4,424.7 72.6,424.7 79.7,424.7 86.9,424.7 94,424.7 101.2,424.7 108.3,424.7 115.5,424.7 122.6,424.7 129.8,424.7 136.9,424.7 144,424.7 151.2,424.7 158.3,424.7 165.5,424.7 172.6,424.7 179.8,424.7 186.9,424.7 194.1,424.7 201.2,424.7 208.4,424.7 215.5,424.7 222.7,424.7 229.8,424.7 237,424.7 244.1,424.7 251.2,424.7 258.4,424.7 265.5,424.7 272.7,424.7 279.8,424.7 287,424.7 294.1,424.7 301.3,424.7 308.4,424.7 315.6,424.7 322.7,424.7 329.9,424.7 337,424.7 344.2,424.7 351.3,424.7 358.5,424.7 365.6,424.7 372.7,424.7 379.9,424.7 387,424.7 394.2,424.7 401.3,424.7 408.5,424.7 415.6,424.7 422.8,424.7 429.9,424.7 437.1,424.7 444.2,424.7 451.4,424.7 458.5,424.7 465.7,424.7 472.8,424.7 479.9,424.7 487.1,424.7 494.2,424.7 501.4,424.7 508.5,424.7 515.7,424.7 522.8,424.7 530,424.7 537.1,424.7 544.3,424.7 551.4,424.7 558.6,424.7 565.7,424.7 572.9,424.7 580,424.7 587.1,424.7 594.3,424.7 601.4,424.7 608.6,424.7 615.7,424.7 622.9,424.7 630,424.7 637.2,424.7 644.3,424.7 651.5,424.7 658.6,424.7 665.8,424.7 672.9,424.7 680.1,424.7 687.2,424.7 694.3,395.3 701.5,395.3 708.6,395.3 715.8,395.3 722.9,395.3 730.1,395.3 737.2,395.3 744.4,395.3 751.5,395.3 758.7,395.3 765.8,395.3 773,395.3 780.1,395.3 787.3,395.3 794.4,395.3 801.6,395.3 808.7,395.3 815.8,395.3 823,395.3 830.1,395.3 837.3,395.3 844.4,395.3 851.6,395.3 858.7,395.3 865.9,395.3 873,395.3 880.2,395.3 887.3,395.3 894.5,395.3 901.6,395.3 908.8,395.3 915.9,395.3 923,395.3 930.2,395.3 937.3,395.3 944.5,395.3 951.6,395.3 958.8,395.3 965.9,395.3 973.1,395.3 980.2,395.3 987.4,395.3 994.5,395.3 1001.7,395.3 1008.8,395.3 1016,395.3 1023.1,395.3 1030.2,395.3 1037.4,395.3 1044.5,395.3 1051.7,395.3 1058.8,395.3 1066,395.3 1073.1,395.3 1080.3,395.3 1087.4,395.3 1094.6,395.3 1101.7,395.3 1108.9,395.3 1116,395.3 1123.2,395.3 1130.3,395.3 1137.4,395.3 1144.6,395.3 1151.7,395.3 1158.9,395.3 1166,395.3 1173.2,395.3 1180.3,395.3 1187.5,395.3 1194.6,395.3 1201.8,395.3 1208.9,395.3 1216.1,395.3 1223.2,395.3 1230.4,395.3 1237.5,395.3 1244.7,395.3 1251.8,395.3 1258.9,395.3 1266.1,395.3 1273.2,395.3 1280.4,395.3 1287.5,395.3 1294.7,395.3 1301.8,395.3 1309,395.3 1316.1,395.3 1323.3,395.3 1330.4,395.3 1337.6,395.3 1344.7,395.3 1351.9,395.3 1359,395.3" fill="none" stroke="#2ca02c" stroke-width="2.55" stroke-linejoin="round" marker-start="url(#m4)" marker-mid="url(#m4)" marker-end="url(#m4)"/>
<polyline points="51.1,424.7 58.3,424.7 65.4,424.7 72.6,424.7 79.7,424.7 86.9,424.7 94,424.7 101.2,424.7 108.3,424.7 115.5,424.7 122.6,424.7 129.8,424.7 136.9,424.7 144,424.7 151.2,424.7 158.3,424.7 165.5,424.7 172.6,424.7 179.8,424.7 186.9,424.7 194.1,424.7 201.2,424.7 208.4,424.7 215.5,424.7 222.7,424.7 229.8,424.7 237,424.7 244.1,424.7 251.2,424.7 258.4,424.7 265.5,424.7 272.7,424.7 279.8,424.7 287,424.7 294.1,424.7 301.3,424.7 308.4,424.7 315.6,424.7 322.7,424.7 329.9,424.7 337,424.7 344.2,424.7 351.3,424.7 358.5,424.7 365.6,424.7 372.7,424.7 379.9,424.7 387,424.7 394.2,424.7 401.3,424.7 408.5,424.7 415.6,424.7 422.8,424.7 429.9,424.7 437.1,424.7 444.2,424.7 451.4,424.7 458.5,424.7 465.7,424.7 472.8,424.7 479.9,424.7 487.1,424.7 494.2,424.7 501.4,424.7 508.5,424.7 515.7,424.7 522.8,424.7 530,424.7 537.1,424.7 544.3,424.7 551.4,424.7 558.6,424.7 565.7,424.7 572.9,424.7 580,424.7 587.1,424.7 594.3,424.7 601.4,424.7 608.6,424.7 615.7,424.7 622.9,424.7 630,424.7 637.2,424.7 644.3,424.7 651.5,424.7 658.6,424.7 665.8,424.7 672.9,424.7 680.1,424.7 687.2,424.7 694.3,405.1 701.5,405.1 708.6,405.1 715.8,405.1 722.9,405.1 730.1,405.1 737.2,405.1 744.4,405.1 751.5,405.1 758.7,405.1 765.8,405.1 773,405.1 780.1,405.1 787.3,405.1 794.4,405.1 801.6,405.1 808.7,405.1 815.8,405.1 823,405.1 830.1,405.1 837.3,405.1 844.4,405.1 851.6,405.1 858.7,405.1 865.9,405.1 873,405.1 880.2,405.1 887.3,405.1 894.5,405.1 901.6,405.1 908.8,405.1 915.9,405.1 923,405.1 930.2,405.1 937.3,405.1 944.5,405.1 951.6,405.1 958.8,405.1 965.9,405.1 973.1,405.1 980.2,405.1 987.4,405.1 994.5,405.1 1001.7,405.1 1008.8,405.1 1016,405.1 1023.1,405.1 1030.2,405.1 1037.4,405.1 1044.5,405.1 1051.7,405.1 1058.8,405.1 1066,405.1 1073.1,405.1 1080.3,405.1 1087.4,405.1 1094.6,405.1 1101.7,405.1 1108.9,405.1 1116,405.1 1123.2,405.1 1130.3,405.1 1137.4,405.1 1144.6,405.1 1151.7,405.1 1158.9,405.1 1166,405.1 1173.2,405.1 1180.3,405.1 1187.5,405.1 1194.6,405.1 1201.8,405.1 1208.9,405.1 1216.1,405.1 1223.2,405.1 1230.4,405.1 1237.5,405.1 1244.7,405.1 1251.8,405.1 1258.9,405.1 1266.1,405.1 1273.2,405.1 1280.4,405.1 1287.5,405.1 1294.7,405.1 1301.8,405.1 1309,405.1 1316.1,405.1 1323.3,405.1 1330.4,405.1 1337.6,405.1 1344.7,405.1 1351.9,405.1 1359,405.1" fill="none" stroke="#aec7e8" stroke-width="2.55" stroke-linejoin="round" marker-start="url(#m2)" marker-mid="url(#m2)" marker-end="url(#m2)"/>
<polyline points="51.1,424.7 58.3,424.7 65.4,424.7 72.6,424.7 79.7,424.7 86.9,424.7 94,424.7 101.2,424.7 108.3,424.7 115.5,424.7 122.6,424.7 129.8,424.7 136.9,424.7 144,424.7 151.2,424.7 158.3,424.7 165.5,424.7 172.6,424.7 179.8,424.7 186.9,424.7 194.1,424.7 201.2,424.7 208.4,424.7 215.5,424.7 222.7,424.7 229.8,424.7 237,424.7 244.1,424.7 251.2,424.7 258.4,424.7 265.5,424.7 272.7,424.7 279.8,424.7 287,424.7 294.1,424.7 301.3,424.7 308.4,424.7 315.6,424.7 322.7,424.7 329.9,424.7 337,424.7 344.2,424.7 351.3,424.7 358.5,424.7 365.6,424.7 372.7,424.7 379.9,424.7 387,424.7 394.2,424.7 401.3,424.7 408.5,424.7 415.6,424.7 422.8,424.7 429.9,424.7 437.1,424.7 444.2,424.7 451.4,424.7 458.5,424.7 465.7,424.7 472.8,424.7 479.9,424.7 487.1,424.7 494.2,424.7 501.4,424.7 508.5,424.7 515.7,424.7 522.8,424.7 530,424.7 537.1,424.7 544.3,424.7 551.4,424.7 558.6,424.7 565.7,424.7 572.9,424.7 580,424.7 587.1,424.7 594.3,424.7 601.4,424.7 608.6,424.7 615.7,424.7 622.9,424.7 630,424.7 637.2,424.7 644.3,424.7 651.5,424.7 658.6,424.7 665.8,424.7 672.9,424.7 680.1,424.7 687.2,424.7 694.3,379.6 701.5,379.6 708.6,379.6 715.8,379.6 722.9,379.6 730.1,379.6 737.2,379.6 744.4,379.6 751.5,379.6 758.7,379.6 765.8,379.6 773,379.6 780.1,379.6 787.3,379.6 794.4,379.6 801.6,379.6 808.7,379.6 815.8,379.6 823,379.6 830.1,379.6 837.3,379.6 844.4,379.6 851.6,379.6 858.7,379.6 865.9,379.6 873,379.6 880.2,379.6 887.3,379.6 894.5,379.6 901.6,379.6 908.8,379.6 915.9,379.6 923,379.6 930.2,379.6 937.3,379.6 944.5,379.6 951.6,379.6 958.8,379.6 965.9,379.6 973.1,379.6 980.2,379.6 987.4,379.6 994.5,379.6 1001.7,379.6 1008.8,379.6 1016,379.6 1023.1,379.6 1030.2,379.6 1037.4,379.6 1044.5,379.6 1051.7,379.6 1058.8,379.6 1066,379.6 1073.1,379.6 1080.3,379.6 1087.4,379.6 1094.6,379.6 1101.7,379.6 1108.9,379.6 1116,379.6 1123.2,379.6 1130.3,379.6 1137.4,379.6 1144.6,379.6 1151.7,379.6 1158.9,379.6 1166,379.6 1173.2,379.6 1180.3,379.6 1187.5,379.6 1194.6,379.6 1201.8,379.6 1208.9,379.6 1216.1,379.6 1223.2,379.6 1230.4,379.6 1237.5,379.6 1244.7,379.6 1251.8,379.6 1258.9,379.6 1266.1,379.6 1273.2,379.6 1280.4,379.6 1287.5,379.6 1294.7,379.6 1301.8,379.6 1309,379.6 1316.1,379.6 1323.3,379.6 1330.4,379.6 1337.6,379.6 1344.7,379.6 1351.9,379.6 1359,379.6" fill="none" stroke="#ff7f0e" stroke-width="2.55" stroke-linejoin="round" marker-start="url(#m1)" marker-mid="url(#m1)" marker-end="url(#m1)"/>
<polyline points="51.1,424.7 58.3,424.7 65.4,424.7 72.6,424.7 79.7,424.7 86.9,424.7 94,424.7 101.2,424.7 108.3,424.7 115.5,424.7 122.6,424.7 129.8,424.7 136.9,424.7 144,424.7 151.2,424.7 158.3,424.7 165.5,424.7 172.6,424.7 179.8,424.7 186.9,424.7 194.1,424.7 201.2,424.7 208.4,424.7 215.5,424.7 222.7,424.7 229.8,424.7 237,424.7 244.1,424.7 251.2,424.7 258.4,424.7 265.5,424.7 272.7,424.7 279.8,424.7 287,424.7 294.1,424.7 301.3,424.7 308.4,424.7 315.6,424.7 322.7,424.7 329.9,424.7 337,424.7 344.2,424.7 351.3,424.7 358.5,424.7 365.6,424.7 372.7,424.7 379.9,424.7 387,424.7 394.2,424.7 401.3,424.7 408.5,424.7 415.6,424.7 422.8,424.7 429.9,424.7 437.1,424.7 444.2,424.7 451.4,424.7 458.5,424.7 465.7,424.7 472.8,424.7 479.9,424.7 487.1,424.7 494.2,424.7 501.4,424.7 508.5,424.7 515.7,424.7 522.8,424.7 530,424.7 537.1,424.7 544.3,424.7 551.4,424.7 558.6,424.7 565.7,424.7 572.9,424.7 580,424.7 587.1,424.7 594.3,424.7 601.4,424.7 608.6,424.7 615.7,424.7 622.9,424.7 630,424.7 637.2,424.7 644.3,424.7 651.5,424.7 658.6,424.7 665.8,424.7 672.9,424.7 680.1,424.7 687.2,424.7 694.3,416.9 701.5,416.9 708.6,416.9 715.8,416.9 722.9,416.9 730.1,416.9 737.2,416.9 744.4,416.9 751.5,416.9 758.7,416.9 765.8,416.9 773,416.9 780.1,416.9 787.3,416.9 794.4,416.9 801.6,416.9 808.7,416.9 815.8,416.9 823,416.9 830.1,416.9 837.3,416.9 844.4,416.9 851.6,416.9 858.7,416.9 865.9,416.9 873,416.9 880.2,416.9 887.3,416.9 894.5,416.9 901.6,416.9 908.8,416.9 915.9,416.9 923,416.9 930.2,416.9 937.3,416.9 944.5,416.9 951.6,416.9 958.8,416.9 965.9,416.9 973.1,416.9 980.2,416.9 987.4,416.9 994.5,416.9 1001.7,416.9 1008.8,416.9 1016,416.9 1023.1,416.9 1030.2,416.9 1037.4,416.9 1044.5,416.9 1051.7,416.9 1058.8,416.9 1066,416.9 1073.1,416.9 1080.3,416.9 1087.4,416.9 1094.6,416.9 1101.7,416.9 1108.9,416.9 1116,416.9 1123.2,416.9 1130.3,416.9 1137.4,416.9 1144.6,416.9 1151.7,416.9 1158.9,416.9 1166,416.9 1173.2,416.9 1180.3,416.9 1187.5,416.9 1194.6,416.9 1201.8,416.9 1208.9,416.9 1216.1,416.9 1223.2,416.9 1230.4,416.9 1237.5,416.9 1244.7,416.9 1251.8,416.9 1258.9,416.9 1266.1,416.9 1273.2,416.9 1280.4,416.9 1287.5,416.9 1294.7,416.9 1301.8,416.9 1309,416.9 1316.1,416.9 1323.3,416.9 1330.4,416.9 1337.6,416.9 1344.7,416.9 1351.9,416.9 1359,416.9" fill="none" stroke="#1f77b4" stroke-width="2.55" stroke-linejoin="round" marker-start="url(#m0)" marker-mid="url(#m0)" marker-end="url(#m0)"/>
<polyline points="51.1,424.7 58.3,424.7 65.4,424.7 72.6,424.7 79.7,424.7 86.9,424.7 94,424.7 101.2,424.7 108.3,424.7 115.5,424.7 122.6,424.7 129.8,424.7 136.9,424.7 144,424.7 151.2,424.7 158.3,424.7 165.5,424.7 172.6,424.7 179.8,424.7 186.9,424.7 194.1,424.7 201.2,424.7 208.4,424.7 215.5,424.7 222.7,424.7 229.8,424.7 237,424.7 244.1,424.7 251.2,424.7 258.4,424.7 265.5,424.7 272.7,424.7 279.8,424.7 287,424.7 294.1,424.7 301.3,424.7 308.4,424.7 315.6,424.7 322.7,424.7 329.9,424.7 337,424.7 344.2,424.7 351.3,424.7 358.5,424.7 365.6,424.7 372.7,424.7 379.9,424.7 387,424.7 394.2,424.7 401.3,424.7 408.5,424.7 415.6,424.7 422.8,424.7 429.9,424.7 437.1,424.7 444.2,424.7 451.4,424.7 458.5,424.7 465.7,424.7 472.8,424.7 479.9,424.7 487.1,424.7 494.2,424.7 501.4,424.7 508.5,424.7 515.7,424.7 522.8,424.7 530,424.7 537.1,424.7 544.3,424.7 551.4,424.7 558.6,424.7 565.7,424.7 572.9,424.7 580,424.7 587.1,424.7 594.3,424.7 601.4,424.7 608.6,424.7 615.7,424.7 622.9,424.7 630,424.7 637.2,424.7 644.3,424.7 651.5,424.7 658.6,424.7 665.8,424.7 672.9,424.7 680.1,424.7 687.2,424.7 694.3,393.3 701.5,400.2 708.6,400.2 715.8,413.9 722.9,413.9 730.1,413.9 737.2,413.9 744.4,413.9 751.5,413.9 758.7,413.9 765.8,413.9 773,413.9 780.1,413.9 787.3,413.9 794.4,413.9 801.6,413.9 808.7,413.9 815.8,413.9 823,413.9 830.1,413.9 837.3,413.9 844.4,413.9 851.6,413.9 858.7,413.9 865.9,413.9 873,413.9 880.2,413.9 887.3,413.9 894.5,413.9 901.6,413.9 908.8,413.9 915.9,413.9 923,413.9 930.2,413.9 937.3,413.9 944.5,413.9 951.6,413.9 958.8,413.9 965.9,413.9 973.1,413.9 980.2,413.9 987.4,413.9 994.5,413.9 1001.7,413.9 1008.8,413.9 1016,413.9 1023.1,413.9 1030.2,413.9 1037.4,413.9 1044.5,413.9 1051.7,413.9 1058.8,413.9 1066,413.9 1073.1,413.9 1080.3,413.9 1087.4,413.9 1094.6,413.9 1101.7,413.9 1108.9,413.9 1116,413.9 1123.2,413.9 1130.3,413.9 1137.4,413.9 1144.6,413.9 1151.7,413.9 1158.9,413.9 1166,413.9 1173.2,413.9 1180.3,413.9 1187.5,413.9 1194.6,413.9 1201.8,413.9 1208.9,413.9 1216.1,413.9 1223.2,413.9 1230.4,413.9 1237.5,413.9 1244.7,413.9 1251.8,413.9 1258.9,413.9 1266.1,413.9 1273.2,413.9 1280.4,413.9 1287.5,413.9 1294.7,413.9 1301.8,413.9 1309,413.9 1316.1,413.9 1323.3,413.9 1330.4,413.9 1337.6,413.9 1344.7,413.9 1351.9,413.9 1359,413.9" fill="none" stroke="#9edae5" stroke-width="2.55" stroke-linejoin="round" marker-start="url(#m19)" marker-mid="url(#m19)" marker-end="url(#m19)"/>
<polyline points="51.1,424.7 58.3,424.7 65.4,424.7 72.6,424.7 79.7,424.7 86.9,424.7 94,424.7 101.2,424.7 108.3,424.7 115.5,424.7 122.6,424.7 129.8,424.7 136.9,424.7 144,424.7 151.2,424.7 158.3,424.7 165.5,424.7 172.6,424.7 179.8,424.7 186.9,424.7 194.1,424.7 201.2,424.7 208.4,424.7 215.5,424.7 222.7,424.7 229.8,424.7 237,424.7 244.1,424.7 251.2,424.7 258.4,424.7 265.5,424.7 272.7,424.7 279.8,424.7 287,424.7 294.1,424.7 301.3,424.7 308.4,424.7 315.6,424.7 322.7,424.7 329.9,424.7 337,424.7 344.2,424.7 351.3,424.7 358.5,424.7 365.6,424.7 372.7,424.7 379.9,424.7 387,424.7 394.2,424.7 401.3,424.7 408.5,424.7 415.6,424.7 422.8,424.7 429.9,424.7 437.1,424.7 444.2,424.7 451.4,424.7 458.5,424.7 465.7,424.7 472.8,424.7 479.9,424.7 487.1,424.7 494.2,424.7 501.4,424.7 508.5,424.7 515.7,424.7 522.8,424.7 530,424.7 537.1,424.7 544.3,424.7 551.4,424.7 558.6,424.7 565.7,424.7 572.9,424.7 580,424.7 587.1,424.7 594.3,424.7 601.4,424.7 608.6,424.7 615.7,424.7 622.9,424.7 630,424.7 637.2,424.7 644.3,424.7 651.5,424.7 658.6,424.7 665.8,424.7 672.9,424.7 680.1,424.7 687.2,424.7 694.3,389.4 701.5,389.4 708.6,389.4 715.8,389.4 722.9,389.4 730.1,389.4 737.2,389.4 744.4,389.4 751.5,389.4 758.7,389.4 765.8,389.4 773,389.4 780.1,389.4 787.3,389.4 794.4,389.4 801.6,389.4 808.7,389.4 815.8,389.4 823,389.4 830.1,389.4 837.3,389.4 844.4,389.4 851.6,389.4 858.7,389.4 865.9,389.4 873,389.4 880.2,389.4 887.3,389.4 894.5,389.4 901.6,389.4 908.8,389.4 915.9,389.4 923,389.4 930.2,389.4 937.3,389.4 944.5,389.4 951.6,389.4 958.8,389.4 965.9,389.4 973.1,389.4 980.2,389.4 987.4,389.4 994.5,389.4 1001.7,389.4 1008.8,389.4 1016,389.4 1023.1,389.4 1030.2,389.4 1037.4,389.4 1044.5,389.4 1051.7,389.4 1058.8,389.4 1066,389.4 1073.1,389.4 1080.3,389.4 1087.4,389.4 1094.6,389.4 1101.7,389.4 1108.9,389.4 1116,389.4 1123.2,389.4 1130.3,389.4 1137.4,389.4 1144.6,389.4 1151.7,389.4 1158.9,389.4 1166,389.4 1173.2,389.4 1180.3,389.4 1187.5,389.4 1194.6,389.4 1201.8,389.4 1208.9,389.4 1216.1,389.4 1223.2,389.4 1230.4,389.4 1237.5,389.4 1244.7,389.4 1251.8,389.4 1258.9,389.4 1266.1,389.4 1273.2,389.4 1280.4,389.4 1287.5,389.4 1294.7,389.4 1301.8,389.4 1309,389.4 1316.1,389.4 1323.3,389.4 1330.4,389.4 1337.6,389.4 1344.7,389.4 1351.9,389.4 1359,389.4" fill="none" stroke="#17becf" stroke-width="2.55" stroke-linejoin="round" marker-start="url(#m18)" marker-mid="url(#m18)" marker-end="url(#m18)"/>
<polyline points="51.1,424.7 58.3,424.7 65.4,424.7 72.6,424.7 79.7,424.7 86.9,424.7 94,424.7 101.2,424.7 108.3,424.7 115.5,424.7 122.6,424.7 129.8,424.7 136.9,424.7 144,424.7 151.2,424.7 158.3,424.7 165.5,424.7 172.6,424.7 179.8,424.7 186.9,424.7 194.1,424.7 201.2,424.7 208.4,424.7 215.5,424.7 222.7,424.7 229.8,424.7 237,424.7 244.1,424.7 251.2,424.7 258.4,424.7 265.5,424.7 272.7,424.7 279.8,424.7 287,424.7 294.1,424.7 301.3,424.7 308.4,424.7 315.6,424.7 322.7,424.7 329.9,424.7 337,424.7 344.2,424.7 351.3,424.7 358.5,424.7 365.6,424.7 372.7,424.7 379.9,424.7 387,424.7 394.2,424.7 401.3,424.7 408.5,424.7 415.6,424.7 422.8,424.7 429.9,424.7 437.1,424.7 444.2,424.7 451.4,424.7 458.5,424.7 465.7,424.7 472.8,424.7 479.9,424.7 487.1,424.7 494.2,424.7 501.4,424.7 508.5,424.7 515.7,424.7 522.8,424.7 530,424.7 537.1,424.7 544.3,424.7 551.4,424.7 558.6,424.7 565.7,424.7 572.9,424.7 580,424.7 587.1,424.7 594.3,424.7 601.4,424.7 608.6,424.7 615.7,424.7 622.9,424.7 630,424.7 637.2,424.7 644.3,424.7 651.5,424.7 658.6,424.7 665.8,424.7 672.9,424.7 680.1,424.7 687.2,424.7 694.3,336.4 701.5,336.4 708.6,336.4 715.8,336.4 722.9,336.4 730.1,336.4 737.2,336.4 744.4,336.4 751.5,336.4 758.7,336.4 765.8,336.4 773,336.4 780.1,336.4 787.3,336.4 794.4,336.4 801.6,336.4 808.7,336.4 815.8,336.4 823,336.4 830.1,336.4 837.3,336.4 844.4,336.4 851.6,336.4 858.7,336.4 865.9,336.4 873,336.4 880.2,336.4 887.3,336.4 894.5,336.4 901.6,336.4 908.8,336.4 915.9,336.4 923,336.4 930.2,336.4 937.3,336.4 944.5,336.4 951.6,336.4 958.8,336.4 965.9,336.4 973.1,336.4 980.2,336.4 987.4,336.4 994.5,336.4 1001.7,336.4 1008.8,336.4 1016,336.4 1023.1,336.4 1030.2,336.4 1037.4,336.4 1044.5,336.4 1051.7,336.4 1058.8,336.4 1066,336.4 1073.1,336.4 1080.3,336.4 1087.4,336.4 1094.6,336.4 1101.7,336.4 1108.9,336.4 1116,336.4 1123.2,336.4 1130.3,336.4 1137.4,336.4 1144.6,336.4 1151.7,336.4 1158.9,336.4 1166,336.4 1173.2,336.4 1180.3,336.4 1187.5,336.4 1194.6,336.4 1201.8,336.4 1208.9,336.4 1216.1,336.4 1223.2,336.4 1230.4,336.4 1237.5,336.4 1244.7,336.4 1251.8,336.4 1258.9,336.4 1266.1,336.4 1273.2,336.4 1280.4,336.4 1287.5,336.4 1294.7,336.4 1301.8,336.4 1309,336.4 1316.1,336.4 1323.3,336.4 1330.4,336.4 1337.6,336.4 1344.7,336.4 1351.9,336.4 1359,336.4" fill="none" stroke="#dbdb8d" stroke-width="2.55" stroke-linejoin="round" marker-start="url(#m17)" marker-mid="url(#m17)" marker-end="url(#m17)"/>
<polyline points="51.1,424.7 58.3,424.7 65.4,424.7 72.6,424.7 79.7,424.7 86.9,424.7 94,424.7 101.2,424.7 108.3,424.7 115.5,424.7 122.6,424.7 129.8,424.7 136.9,424.7 144,424.7 151.2,424.7 158.3,424.7 165.5,424.7 172.6,424.7 179.8,424.7 186.9,424.7 194.1,424.7 201.2,424.7 208.4,424.7 215.5,424.7 222.7,424.7 229.8,424.7 237,424.7 244.1,424.7 251.2,424.7 258.4,424.7 265.5,424.7 272.7,424.7 279.8,424.7 287,424.7 294.1,424.7 301.3,424.7 308.4,424.7 315.6,424.7 322.7,424.7 329.9,424.7 337,424.7 344.2,424.7 351.3,424.7 358.5,424.7 365.6,424.7 372.7,424.7 379.9,424.7 387,424.7 394.2,424.7 401.3,424.7 408.5,424.7 415.6,424.7 422.8,424.7 429.9,424.7 437.1,424.7 444.2,424.7 451.4,424.7 458.5,424.7 465.7,424.7 472.8,424.7 479.9,424.7 487.1,424.7 494.2,424.7 501.4,424.7 508.5,424.7 515.7,424.7 522.8,424.7 530,424.7 537.1,424.7 544.3,424.7 551.4,424.7 558.6,424.7 565.7,424.7 572.9,424.7 580,424.7 587.1,424.7 594.3,424.7 601.4,424.7 608.6,424.7 615.7,424.7 622.9,424.7 630,424.7 637.2,424.7 644.3,424.7 651.5,424.7 658.6,424.7 665.8,424.7 672.9,424.7 680.1,424.7 687.2,424.7 694.3,389.4 701.5,389.4 708.6,389.4 715.8,389.4 722.9,389.4 730.1,389.4 737.2,389.4 744.4,389.4 751.5,389.4 758.7,389.4 765.8,389.4 773,389.4 780.1,389.4 787.3,389.4 794.4,389.4 801.6,389.4 808.7,389.4 815.8,389.4 823,389.4 830.1,389.4 837.3,389.4 844.4,389.4 851.6,389.4 858.7,389.4 865.9,389.4 873,389.4 880.2,389.4 887.3,389.4 894.5,389.4 901.6,389.4 908.8,389.4 915.9,389.4 923,389.4 930.2,389.4 937.3,389.4 944.5,389.4 951.6,389.4 958.8,389.4 965.9,389.4 973.1,389.4 980.2,389.4 987.4,389.4 994.5,389.4 1001.7,389.4 1008.8,389.4 1016,389.4 1023.1,389.4 1030.2,389.4 1037.4,389.4 1044.5,389.4 1051.7,389.4 1058.8,389.4 1066,389.4 1073.1,389.4 1080.3,389.4 1087.4,389.4 1094.6,389.4 1101.7,389.4 1108.9,389.4 1116,389.4 1123.2,389.4 1130.3,389.4 1137.4,389.4 1144.6,389.4 1151.7,389.4 1158.9,389.4 1166,389.4 1173.2,389.4 1180.3,389.4 1187.5,389.4 1194.6,389.4 1201.8,389.4 1208.9,389.4 1216.1,389.4 1223.2,389.4 1230.4,389.4 1237.5,389.4 1244.7,389.4 1251.8,389.4 1258.9,389.4 1266.1,389.4 1273.2,389.4 1280.4,389.4 1287.5,389.4 1294.7,389.4 1301.8,389.4 1309,389.4 1316.1,389.4 1323.3,389.4 1330.4,389.4 1337.6,389.4 1344.7,389.4 1351.9,389.4 1359,389.4" fill="none" stroke="#bcbd22" stroke-width="2.55" stroke-linejoin="round" marker-start="url(#m16)" marker-mid="url(#m16)" marker-end="url(#m16)"/>
<polyline points="51.1,424.7 58.3,424.7 65.4,424.7 72.6,424.7 79.7,424.7 86.9,424.7 94,424.7 101.2,424.7 108.3,424.7 115.5,424.7 122.6,424.7 129.8,424.7 136.9,424.7 144,424.7 151.2,424.7 158.3,424.7 165.5,424.7 172.6,424.7 179.8,424.7 186.9,424.7 194.1,424.7 201.2,424.7 208.4,424.7 215.5,424.7 222.7,424.7 229.8,424.7 237,424.7 244.1,424.7 251.2,424.7 258.4,424.7 265.5,424.7 272.7,424.7 279.8,424.7 287,424.7 294.1,424.7 301.3,424.7 308.4,424.7 315.6,424.7 322.7,424.7 329.9,424.7 337,424.7 344.2,424.7 351.3,424.7 358.5,424.7 365.6,424.7 372.7,424.7 379.9,424.7 387,424.7 394.2,424.7 401.3,424.7 408.5,424.7 415.6,424.7 422.8,424.7 429.9,424.7 437.1,424.7 444.2,424.7 451.4,424.7 458.5,424.7 465.7,424.7 472.8,424.7 479.9,424.7 487.1,424.7 494.2,424.7 501.4,424.7 508.5,424.7 515.7,424.7 522.8,424.7 530,424.7 537.1,424.7 544.3,424.7 551.4,424.7 558.6,424.7 565.7,424.7 572.9,424.7 580,424.7 587.1,424.7 594.3,424.7 601.4,424.7 608.6,424.7 615.7,424.7 622.9,424.7 630,424.7 637.2,424.7 644.3,424.7 651.5,424.7 658.6,424.7 665.8,424.7 672.9,424.7 680.1,424.7 687.2,424.7 694.3,424.7 701.5,424.7 708.6,424.7 715.8,424.7 722.9,424.7 730.1,424.7 737.2,424.7 744.4,424.7 751.5,424.7 758.7,424.7 765.8,424.7 773,424.7 780.1,424.7 787.3,424.7 794.4,424.7 801.6,424.7 808.7,424.7 815.8,424.7 823,424.7 830.1,424.7 837.3,424.7 844.4,424.7 851.6,424.7 858.7,424.7 865.9,424.7 873,424.7 880.2,424.7 887.3,424.7 894.5,424.7 901.6,424.7 908.8,424.7 915.9,424.7 923,424.7 930.2,424.7 937.3,424.7 944.5,424.7 951.6,424.7 958.8,424.7 965.9,424.7 973.1,424.7 980.2,424.7 987.4,424.7 994.5,424.7 1001.7,424.7 1008.8,424.7 1016,424.7 1023.1,424.7 1030.2,424.7 1037.4,424.7 1044.5,424.7 1051.7,424.7 1058.8,424.7 1066,424.7 1073.1,424.7 1080.3,424.7 1087.4,424.7 1094.6,424.7 1101.7,424.7 1108.9,424.7 1116,424.7 1123.2,424.7 1130.3,424.7 1137.4,424.7 1144.6,424.7 1151.7,424.7 1158.9,424.7 1166,424.7 1173.2,424.7 1180.3,424.7 1187.5,424.7 1194.6,424.7 1201.8,424.7 1208.9,424.7 1216.1,424.7 1223.2,424.7 1230.4,424.7 1237.5,424.7 1244.7,424.7 1251.8,424.7 1258.9,424.7 1266.1,424.7 1273.2,424.7 1280.4,424.7 1287.5,424.7 1294.7,424.7 1301.8,424.7 1309,424.7 1316.1,424.7 1323.3,424.7 1330.4,424.7 1337.6,424.7 1344.7,424.7 1351.9,424.7 1359,424.7" fill="none" stroke="#c7c7c7" stroke-width="2.55" stroke-linejoin="round" marker-start="url(#m15)" marker-mid="url(#m15)" marker-end="url(#m15)"/>
<polyline points="51.1,424.7 58.3,424.7 65.4,424.7 72.6,424.7 79.7,424.7 86.9,424.7 94,424.7 101.2,424.7 108.3,424.7 115.5,424.7 122.6,424.7 129.8,424.7 136.9,424.7 144,424.7 151.2,424.7 158.3,424.7 165.5,424.7 172.6,424.7 179.8,424.7 186.9,424.7 194.1,424.7 201.2,424.7 208.4,424.7 215.5,424.7 222.7,424.7 229.8,424.7 237,424.7 244.1,424.7 251.2,424.7 258.4,424.7 265.5,424.7 272.7,424.7 279.8,424.7 287,424.7 294.1,424.7 301.3,424.7 308.4,424.7 315.6,424.7 322.7,424.7 329.9,424.7 337,424.7 344.2,424.7 351.3,424.7 358.5,424.7 365.6,424.7 372.7,424.7 379.9,424.7 387,424.7 394.2,424.7 401.3,424.7 408.5,424.7 415.6,424.7 422.8,424.7 429.9,424.7 437.1,424.7 444.2,424.7 451.4,424.7 458.5,424.7 465.7,424.7 472.8,424.7 479.9,424.7 487.1,424.7 494.2,424.7 501.4,424.7 508.5,424.7 515.7,424.7 522.8,424.7 530,424.7 537.1,424.7 544.3,424.7 551.4,424.7 558.6,424.7 565.7,424.7 572.9,424.7 580,424.7 587.1,424.7 594.3,424.7 601.4,424.7 608.6,424.7 615.7,424.7 622.9,424.7 630,424.7 637.2,424.7 644.3,424.7 651.5,424.7 658.6,424.7 665.8,424.7 672.9,424.7 680.1,424.7 687.2,424.7 694.3,417.8 701.5,417.8 708.6,417.8 715.8,417.8 722.9,417.8 730.1,417.8 737.2,417.8 744.4,417.8 751.5,417.8 758.7,417.8 765.8,417.8 773,417.8 780.1,417.8 787.3,417.8 794.4,417.8 801.6,417.8 808.7,417.8 815.8,417.8 823,417.8 830.1,417.8 837.3,417.8 844.4,417.8 851.6,417.8 858.7,417.8 865.9,417.8 873,417.8 880.2,417.8 887.3,417.8 894.5,417.8 901.6,417.8 908.8,417.8 915.9,417.8 923,417.8 930.2,417.8 937.3,417.8 944.5,417.8 951.6,417.8 958.8,417.8 965.9,417.8 973.1,417.8 980.2,417.8 987.4,417.8 994.5,417.8 1001.7,417.8 1008.8,417.8 1016,417.8 1023.1,417.8 1030.2,417.8 1037.4,417.8 1044.5,417.8 1051.7,417.8 1058.8,417.8 1066,417.8 1073.1,417.8 1080.3,417.8 1087.4,417.8 1094.6,417.8 1101.7,417.8 1108.9,417.8 1116,417.8 1123.2,417.8 1130.3,417.8 1137.4,417.8 1144.6,417.8 1151.7,417.8 1158.9,417.8 1166,417.8 1173.2,417.8 1180.3,417.8 1187.5,417.8 1194.6,417.8 1201.8,417.8 1208.9,417.8 1216.1,417.8 1223.2,417.8 1230.4,417.8 1237.5,417.8 1244.7,417.8 1251.8,417.8 1258.9,417.8 1266.1,417.8 1273.2,417.8 1280.4,417.8 1287.5,417.8 1294.7,417.8 1301.8,417.8 1309,417.8 1316.1,417.8 1323.3,417.8 1330.4,417.8 1337.6,417.8 1344.7,417.8 1351.9,417.8 1359,417.8" fill="none" stroke="#f7b6d2" stroke-width="2.55" stroke-linejoin="round" marker-start="url(#m13)" marker-mid="url(#m13)" marker-end="url(#m13)"/>
<polyline points="51.1,424.7 58.3,424.7 65.4,424.7 72.6,424.7 79.7,424.7 86.9,424.7 94,424.7 101.2,424.7 108.3,424.7 115.5,424.7 122.6,424.7 129.8,424.7 136.9,424.7 144,424.7 151.2,424.7 158.3,424.7 165.5,424.7 172.6,424.7 179.8,424.7 186.9,424.7 194.1,424.7 201.2,424.7 208.4,424.7 215.5,424.7 222.7,424.7 229.8,424.7 237,424.7 244.1,424.7 251.2,424.7 258.4,424.7 265.5,424.7 272.7,424.7 279.8,424.7 287,424.7 294.1,424.7 301.3,424.7 308.4,424.7 315.6,424.7 322.7,424.7 329.9,424.7 337,424.7 344.2,424.7 351.3,424.7 358.5,424.7 365.6,424.7 372.7,424.7 379.9,424.7 387,424.7 394.2,424.7 401.3,424.7 408.5,424.7 415.6,424.7 422.8,424.7 429.9,424.7 437.1,424.7 444.2,424.7 451.4,424.7 458.5,424.7 465.7,424.7 472.8,424.7 479.9,424.7 487.1,424.7 494.2,424.7 501.4,424.7 508.5,424.7 515.7,424.7 522.8,424.7 530,424.7 537.1,424.7 544.3,424.7 551.4,424.7 558.6,424.7 565.7,424.7 572.9,424.7 580,424.7 587.1,424.7 594.3,424.7 601.4,424.7 608.6,424.7 615.7,424.7 622.9,424.7 630,424.7 637.2,424.7 644.3,424.7 651.5,424.7 658.6,424.7 665.8,424.7 672.9,424.7 680.1,424.7 687.2,424.7 694.3,370.8 701.5,370.8 708.6,370.8 715.8,370.8 722.9,370.8 730.1,370.8 737.2,370.8 744.4,370.8 751.5,370.8 758.7,370.8 765.8,370.8 773,370.8 780.1,370.8 787.3,370.8 794.4,370.8 801.6,370.8 808.7,370.8 815.8,370.8 823,370.8 830.1,370.8 837.3,370.8 844.4,370.8 851.6,370.8 858.7,370.8 865.9,370.8 873,370.8 880.2,370.8 887.3,370.8 894.5,370.8 901.6,370.8 908.8,370.8 915.9,370.8 923,370.8 930.2,370.8 937.3,370.8 944.5,370.8 951.6,370.8 958.8,370.8 965.9,370.8 973.1,370.8 980.2,370.8 987.4,370.8 994.5,370.8 1001.7,370.8 1008.8,370.8 1016,370.8 1023.1,370.8 1030.2,370.8 1037.4,370.8 1044.5,370.8 1051.7,370.8 1058.8,370.8 1066,370.8 1073.1,370.8 1080.3,370.8 1087.4,370.8 1094.6,370.8 1101.7,370.8 1108.9,370.8 1116,370.8 1123.2,370.8 1130.3,370.8 1137.4,370.8 1144.6,370.8 1151.7,370.8 1158.9,370.8 1166,370.8 1173.2,370.8 1180.3,370.8 1187.5,370.8 1194.6,370.8 1201.8,370.8 1208.9,370.8 1216.1,370.8 1223.2,370.8 1230.4,370.8 1237.5,370.8 1244.7,370.8 1251.8,370.8 1258.9,370.8 1266.1,370.8 1273.2,370.8 1280.4,370.8 1287.5,370.8 1294.7,370.8 1301.8,370.8 1309,370.8 1316.1,370.8 1323.3,370.8 1330.4,370.8 1337.6,370.8 1344.7,370.8 1351.9,370.8 1359,370.8" fill="none" stroke="#e377c2" stroke-width="2.55" stroke-linejoin="round" marker-start="url(#m12)" marker-mid="url(#m12)" marker-end="url(#m12)"/>
<polyline points="51.1,424.7 58.3,424.7 65.4,424.7 72.6,424.7 79.7,424.7 86.9,424.7 94,424.7 101.2,424.7 108.3,424.7 115.5,424.7 122.6,424.7 129.8,424.7 136.9,424.7 144,424.7 151.2,424.7 158.3,424.7 165.5,424.7 172.6,424.7 179.8,424.7 186.9,424.7 194.1,424.7 201.2,424.7 208.4,424.7 215.5,424.7 222.7,424.7 229.8,424.7 237,424.7 244.1,424.7 251.2,424.7 258.4,424.7 265.5,424.7 272.7,424.7 279.8,424.7 287,424.7 294.1,424.7 301.3,424.7 308.4,424.7 315.6,424.7 322.7,424.7 329.9,424.7 337,424.7 344.2,424.7 351.3,424.7 358.5,424.7 365.6,424.7 372.7,424.7 379.9,424.7 387,424.7 394.2,424.7 401.3,424.7 408.5,424.7 415.6,424.7 422.8,424.7 429.9,424.7 437.1,424.7 444.2,424.7 451.4,424.7 458.5,424.7 465.7,424.7 472.8,424.7 479.9,424.7 487.1,424.7 494.2,424.7 501.4,424.7 508.5,424.7 515.7,424.7 522.8,424.7 530,424.7 537.1,424.7 544.3,424.7 551.4,424.7 558.6,424.7 565.7,424.7 572.9,424.7 580,424.7 587.1,424.7 594.3,424.7 601.4,424.7 608.6,424.7 615.7,424.7 622.9,424.7 630,424.7 637.2,424.7 644.3,424.7 651.5,424.7 658.6,424.7 665.8,424.7 672.9,424.7 680.1,424.7 687.2,424.7 694.3,375.7 701.5,375.7 708.6,375.7 715.8,375.7 722.9,375.7 730.1,375.7 737.2,375.7 744.4,375.7 751.5,375.7 758.7,375.7 765.8,375.7 773,375.7 780.1,375.7 787.3,375.7 794.4,375.7 801.6,375.7 808.7,375.7 815.8,375.7 823,375.7 830.1,375.7 837.3,375.7 844.4,375.7 851.6,375.7 858.7,375.7 865.9,375.7 873,375.7 880.2,375.7 887.3,375.7 894.5,375.7 901.6,375.7 908.8,375.7 915.9,375.7 923,375.7 930.2,375.7 937.3,375.7 944.5,375.7 951.6,375.7 958.8,375.7 965.9,375.7 973.1,375.7 980.2,375.7 987.4,375.7 994.5,375.7 1001.7,375.7 1008.8,375.7 1016,375.7 1023.1,375.7 1030.2,375.7 1037.4,375.7 1044.5,375.7 1051.7,375.7 1058.8,375.7 1066,375.7 1073.1,375.7 1080.3,375.7 1087.4,375.7 1094.6,375.7 1101.7,375.7 1108.9,375.7 1116,375.7 1123.2,375.7 1130.3,375.7 1137.4,375.7 1144.6,375.7 1151.7,375.7 1158.9,375.7 1166,375.7 1173.2,375.7 1180.3,375.7 1187.5,375.7 1194.6,375.7 1201.8,375.7 1208.9,375.7 1216.1,375.7 1223.2,375.7 1230.4,375.7 1237.5,375.7 1244.7,375.7 1251.8,375.7 1258.9,375.7 1266.1,375.7 1273.2,375.7 1280.4,375.7 1287.5,375.7 1294.7,375.7 1301.8,375.7 1309,375.7 1316.1,375.7 1323.3,375.7 1330.4,375.7 1337.6,375.7 1344.7,375.7 1351.9,375.7 1359,375.7" fill="none" stroke="#c49c94" stroke-width="2.55" stroke-linejoin="round" marker-start="url(#m11)" marker-mid="url(#m11)" marker-end="url(#m11)"/>
<polyline points="51.1,424.7 58.3,424.7 65.4,424.7 72.6,424.7 79.7,424.7 86.9,424.7 94,424.7 101.2,424.7 108.3,424.7 115.5,424.7 122.6,424.7 129.8,424.7 136.9,424.7 144,424.7 151.2,424.7 158.3,424.7 165.5,424.7 172.6,424.7 179.8,424.7 186.9,424.7 194.1,424.7 201.2,424.7 208.4,424.7 215.5,424.7 222.7,424.7 229.8,424.7 237,424.7 244.1,424.7 251.2,424.7 258.4,424.7 265.5,424.7 272.7,424.7 279.8,424.7 287,424.7 294.1,424.7 301.3,424.7 308.4,424.7 315.6,424.7 322.7,424.7 329.9,424.7 337,424.7 344.2,424.7 351.3,424.7 358.5,424.7 365.6,424.7 372.7,424.7 379.9,424.7 387,424.7 394.2,424.7 401.3,424.7 408.5,424.7 415.6,424.7 422.8,424.7 429.9,424.7 437.1,424.7 444.2,424.7 451.4,424.7 458.5,424.7 465.7,424.7 472.8,424.7 479.9,424.7 487.1,424.7 494.2,424.7 501.4,424.7 508.5,424.7 515.7,424.7 522.8,424.7 530,424.7 537.1,424.7 544.3,424.7 551.4,424.7 558.6,424.7 565.7,424.7 572.9,424.7 580,424.7 587.1,424.7 594.3,424.7 601.4,424.7 608.6,424.7 615.7,424.7 622.9,424.7 630,424.7 637.2,424.7 644.3,424.7 651.5,424.7 658.6,426.7 665.8,426.7 672.9,429.6 680.1,429.6 687.2,429.6 694.3,385.5 701.5,385.5 708.6,385.5 715.8,385.5 722.9,385.5 730.1,385.5 737.2,385.5 744.4,385.5 751.5,385.5 758.7,385.5 765.8,385.5 773,385.5 780.1,385.5 787.3,385.5 794.4,385.5 801.6,385.5 808.7,385.5 815.8,385.5 823,385.5 830.1,385.5 837.3,385.5 844.4,385.5 851.6,385.5 858.7,385.5 865.9,385.5 873,385.5 880.2,385.5 887.3,385.5 894.5,385.5 901.6,385.5 908.8,385.5 915.9,385.5 923,385.5 930.2,385.5 937.3,385.5 944.5,385.5 951.6,385.5 958.8,385.5 965.9,385.5 973.1,385.5 980.2,385.5 987.4,385.5 994.5,385.5 1001.7,385.5 1008.8,385.5 1016,385.5 1023.1,385.5 1030.2,385.5 1037.4,385.5 1044.5,385.5 1051.7,385.5 1058.8,385.5 1066,385.5 1073.1,385.5 1080.3,385.5 1087.4,385.5 1094.6,385.5 1101.7,385.5 1108.9,385.5 1116,385.5 1123.2,385.5 1130.3,385.5 1137.4,385.5 1144.6,385.5 1151.7,385.5 1158.9,385.5 1166,385.5 1173.2,385.5 1180.3,385.5 1187.5,385.5 1194.6,385.5 1201.8,385.5 1208.9,385.5 1216.1,385.5 1223.2,385.5 1230.4,385.5 1237.5,385.5 1244.7,385.5 1251.8,385.5 1258.9,385.5 1266.1,385.5 1273.2,385.5 1280.4,385.5 1287.5,385.5 1294.7,385.5 1301.8,385.5 1309,385.5 1316.1,385.5 1323.3,385.5 1330.4,385.5 1337.6,385.5 1344.7,385.5 1351.9,385.5 1359,385.5" fill="none" stroke="#8c564b" stroke-width="2.55" stroke-linejoin="round" marker-start="url(#m10)" marker-mid="url(#m10)" marker-end="url(#m10)"/>
<polyline points="51.1,424.7 58.3,424.7 65.4,424.7 72.6,424.7 79.7,424.7 86.9,424.7 94,424.7 101.2,424.7 108.3,424.7 115.5,424.7 122.6,424.7 129.8,424.7 136.9,424.7 144,424.7 151.2,424.7 158.3,424.7 165.5,424.7 172.6,424.7 179.8,424.7 186.9,424.7 194.1,424.7 201.2,424.7 208.4,424.7 215.5,424.7 222.7,424.7 229.8,424.7 237,424.7 244.1,424.7 251.2,424.7 258.4,424.7 265.5,424.7 272.7,424.7 279.8,424.7 287,424.7 294.1,424.7 301.3,424.7 308.4,424.7 315.6,424.7 322.7,424.7 329.9,424.7 337,424.7 344.2,424.7 351.3,424.7 358.5,424.7 365.6,424.7 372.7,424.7 379.9,424.7 387,424.7 394.2,424.7 401.3,424.7 408.5,424.7 415.6,424.7 422.8,424.7 429.9,424.7 437.1,424.7 444.2,424.7 451.4,424.7 458.5,424.7 465.7,424.7 472.8,424.7 479.9,424.7 487.1,424.7 494.2,424.7 501.4,424.7 508.5,424.7 515.7,424.7 522.8,424.7 530,424.7 537.1,424.7 544.3,424.7 551.4,424.7 558.6,424.7 565.7,424.7 572.9,424.7 580,424.7 587.1,424.7 594.3,424.7 601.4,424.7 608.6,424.7 615.7,424.7 622.9,424.7 630,424.7 637.2,424.7 644.3,424.7 651.5,424.7 658.6,424.7 665.8,424.7 672.9,424.7 680.1,424.7 687.2,424.7 694.3,398.2 701.5,398.2 708.6,398.2 715.8,398.2 722.9,398.2 730.1,398.2 737.2,398.2 744.4,398.2 751.5,398.2 758.7,398.2 765.8,398.2 773,398.2 780.1,398.2 787.3,398.2 794.4,398.2 801.6,398.2 808.7,398.2 815.8,398.2 823,398.2 830.1,398.2 837.3,398.2 844.4,398.2 851.6,398.2 858.7,398.2 865.9,398.2 873,398.2 880.2,398.2 887.3,398.2 894.5,398.2 901.6,398.2 908.8,398.2 915.9,398.2 923,398.2 930.2,398.2 937.3,398.2 944.5,398.2 951.6,398.2 958.8,398.2 965.9,398.2 973.1,398.2 980.2,398.2 987.4,398.2 994.5,398.2 1001.7,398.2 1008.8,398.2 1016,398.2 1023.1,398.2 1030.2,398.2 1037.4,398.2 1044.5,398.2 1051.7,398.2 1058.8,398.2 1066,398.2 1073.1,398.2 1080.3,398.2 1087.4,398.2 1094.6,398.2 1101.7,398.2 1108.9,398.2 1116,398.2 1123.2,398.2 1130.3,398.2 1137.4,398.2 1144.6,398.2 1151.7,398.2 1158.9,398.2 1166,398.2 1173.2,398.2 1180.3,398.2 1187.5,398.2 1194.6,398.2 1201.8,398.2 1208.9,398.2 1216.1,398.2 1223.2,398.2 1230.4,398.2 1237.5,398.2 1244.7,398.2 1251.8,398.2 1258.9,398.2 1266.1,398.2 1273.2,398.2 1280.4,398.2 1287.5,398.2 1294.7,398.2 1301.8,398.2 1309,398.2 1316.1,398.2 1323.3,398.2 1330.4,398.2 1337.6,398.2 1344.7,398.2 1351.9,398.2 1359,398.2" fill="none" stroke="#c5b0d5" stroke-width="2.55" stroke-linejoin="round" marker-start="url(#m9)" marker-mid="url(#m9)" marker-end="url(#m9)"/>
<polyline points="51.1,424.7 58.3,424.7 65.4,424.7 72.6,424.7 79.7,424.7 86.9,424.7 94,424.7 101.2,424.7 108.3,424.7 115.5,424.7 122.6,424.7 129.8,424.7 136.9,424.7 144,424.7 151.2,424.7 158.3,424.7 165.5,424.7 172.6,424.7 179.8,424.7 186.9,424.7 194.1,424.7 201.2,424.7 208.4,424.7 215.5,424.7 222.7,424.7 229.8,424.7 237,424.7 244.1,424.7 251.2,424.7 258.4,424.7 265.5,424.7 272.7,424.7 279.8,424.7 287,424.7 294.1,424.7 301.3,424.7 308.4,424.7 315.6,424.7 322.7,424.7 329.9,424.7 337,424.7 344.2,424.7 351.3,424.7 358.5,424.7 365.6,424.7 372.7,424.7 379.9,424.7 387,424.7 394.2,424.7 401.3,424.7 408.5,424.7 415.6,424.7 422.8,424.7 429.9,424.7 437.1,424.7 444.2,424.7 451.4,424.7 458.5,424.7 465.7,424.7 472.8,424.7 479.9,424.7 487.1,424.7 494.2,424.7 501.4,424.7 508.5,424.7 515.7,424.7 522.8,424.7 530,424.7 537.1,424.7 544.3,424.7 551.4,424.7 558.6,424.7 565.7,424.7 572.9,424.7 580,424.7 587.1,424.7 594.3,424.7 601.4,424.7 608.6,424.7 615.7,424.7 622.9,424.7 630,424.7 637.2,424.7 644.3,424.7 651.5,424.7 658.6,424.7 665.8,424.7 672.9,424.7 680.1,424.7 687.2,424.7 694.3,400.2 701.5,400.2 708.6,400.2 715.8,400.2 722.9,400.2 730.1,400.2 737.2,400.2 744.4,400.2 751.5,400.2 758.7,400.2 765.8,400.2 773,400.2 780.1,400.2 787.3,400.2 794.4,400.2 801.6,400.2 808.7,400.2 815.8,400.2 823,400.2 830.1,400.2 837.3,400.2 844.4,400.2 851.6,400.2 858.7,400.2 865.9,400.2 873,400.2 880.2,400.2 887.3,400.2 894.5,400.2 901.6,400.2 908.8,400.2 915.9,400.2 923,400.2 930.2,400.2 937.3,400.2 944.5,400.2 951.6,400.2 958.8,400.2 965.9,400.2 973.1,400.2 980.2,400.2 987.4,400.2 994.5,400.2 1001.7,400.2 1008.8,400.2 1016,400.2 1023.1,400.2 1030.2,400.2 1037.4,400.2 1044.5,400.2 1051.7,400.2 1058.8,400.2 1066,400.2 1073.1,400.2 1080.3,400.2 1087.4,400.2 1094.6,400.2 1101.7,400.2 1108.9,400.2 1116,400.2 1123.2,400.2 1130.3,400.2 1137.4,400.2 1144.6,400.2 1151.7,400.2 1158.9,400.2 1166,400.2 1173.2,400.2 1180.3,400.2 1187.5,400.2 1194.6,400.2 1201.8,400.2 1208.9,400.2 1216.1,400.2 1223.2,400.2 1230.4,400.2 1237.5,400.2 1244.7,400.2 1251.8,400.2 1258.9,400.2 1266.1,400.2 1273.2,400.2 1280.4,400.2 1287.5,400.2 1294.7,400.2 1301.8,400.2 1309,400.2 1316.1,400.2 1323.3,400.2 1330.4,400.2 1337.6,400.2 1344.7,400.2 1351.9,400.2 1359,400.2" fill="none" stroke="#9467bd" stroke-width="2.55" stroke-linejoin="round" marker-start="url(#m8)" marker-mid="url(#m8)" marker-end="url(#m8)"/>
<polyline points="51.1,424.7 58.3,424.7 65.4,424.7 72.6,424.7 79.7,424.7 86.9,424.7 94,424.7 101.2,424.7 108.3,424.7 115.5,424.7 122.6,424.7 129.8,424.7 136.9,424.7 144,424.7 151.2,424.7 158.3,424.7 165.5,424.7 172.6,424.7 179.8,424.7 186.9,424.7 194.1,424.7 201.2,424.7 208.4,424.7 215.5,424.7 222.7,424.7 229.8,424.7 237,424.7 244.1,424.7 251.2,424.7 258.4,424.7 265.5,424.7 272.7,424.7 279.8,424.7 287,424.7 294.1,424.7 301.3,424.7 308.4,424.7 315.6,424.7 322.7,424.7 329.9,424.7 337,424.7 344.2,424.7 351.3,424.7 358.5,424.7 365.6,424.7 372.7,424.7 379.9,424.7 387,424.7 394.2,424.7 401.3,424.7 408.5,424.7 415.6,424.7 422.8,424.7 429.9,424.7 437.1,424.7 444.2,424.7 451.4,424.7 458.5,424.7 465.7,424.7 472.8,424.7 479.9,424.7 487.1,424.7 494.2,424.7 501.4,424.7 508.5,424.7 515.7,424.7 522.8,424.7 530,424.7 537.1,424.7 544.3,424.7 551.4,424.7 558.6,424.7 565.7,424.7 572.9,424.7 580,424.7 587.1,424.7 594.3,424.7 601.4,424.7 608.6,424.7 615.7,424.7 622.9,424.7 630,424.7 637.2,424.7 644.3,424.7 651.5,424.7 658.6,424.7 665.8,424.7 672.9,424.7 680.1,424.7 687.2,424.7 694.3,277.6 701.5,281.5 708.6,282.5 715.8,292.3 722.9,292.3 730.1,292.3 737.2,292.3 744.4,292.3 751.5,292.3 758.7,292.3 765.8,292.3 773,292.3 780.1,292.3 787.3,292.3 794.4,292.3 801.6,292.3 808.7,292.3 815.8,292.3 823,292.3 830.1,292.3 837.3,292.3 844.4,292.3 851.6,292.3 858.7,292.3 865.9,292.3 873,292.3 880.2,292.3 887.3,292.3 894.5,292.3 901.6,292.3 908.8,292.3 915.9,292.3 923,292.3 930.2,292.3 937.3,292.3 944.5,292.3 951.6,292.3 958.8,292.3 965.9,292.3 973.1,292.3 980.2,292.3 987.4,292.3 994.5,292.3 1001.7,292.3 1008.8,292.3 1016,292.3 1023.1,292.3 1030.2,292.3 1037.4,292.3 1044.5,292.3 1051.7,292.3 1058.8,292.3 1066,292.3 1073.1,292.3 1080.3,292.3 1087.4,292.3 1094.6,292.3 1101.7,292.3 1108.9,292.3 1116,292.3 1123.2,292.3 1130.3,292.3 1137.4,292.3 1144.6,292.3 1151.7,292.3 1158.9,292.3 1166,292.3 1173.2,292.3 1180.3,292.3 1187.5,292.3 1194.6,292.3 1201.8,292.3 1208.9,292.3 1216.1,292.3 1223.2,292.3 1230.4,292.3 1237.5,292.3 1244.7,292.3 1251.8,292.3 1258.9,292.3 1266.1,292.3 1273.2,292.3 1280.4,292.3 1287.5,292.3 1294.7,292.3 1301.8,292.3 1309,292.3 1316.1,292.3 1323.3,292.3 1330.4,292.3 1337.6,292.3 1344.7,292.3 1351.9,292.3 1359,292.3" fill="none" stroke="#ff9896" stroke-width="2.55" stroke-linejoin="round" marker-start="url(#m7)" marker-mid="url(#m7)" marker-end="url(#m7)"/>
<polyline points="51.1,424.7 58.3,424.7 65.4,424.7 72.6,424.7 79.7,424.7 86.9,424.7 94,424.7 101.2,424.7 108.3,424.7 115.5,424.7 122.6,424.7 129.8,424.7 136.9,424.7 144,424.7 151.2,424.7 158.3,424.7 165.5,424.7 172.6,424.7 179.8,424.7 186.9,424.7 194.1,424.7 201.2,424.7 208.4,424.7 215.5,424.7 222.7,424.7 229.8,424.7 237,424.7 244.1,424.7 251.2,424.7 258.4,424.7 265.5,424.7 272.7,424.7 279.8,424.7 287,424.7 294.1,424.7 301.3,424.7 308.4,424.7 315.6,424.7 322.7,424.7 329.9,424.7 337,424.7 344.2,424.7 351.3,424.7 358.5,424.7 365.6,424.7 372.7,424.7 379.9,424.7 387,424.7 394.2,424.7 401.3,424.7 408.5,424.7 415.6,424.7 422.8,424.7 429.9,424.7 437.1,424.7 444.2,424.7 451.4,424.7 458.5,424.7 465.7,424.7 472.8,424.7 479.9,424.7 487.1,424.7 494.2,424.7 501.4,424.7 508.5,424.7 515.7,424.7 522.8,424.7 530,424.7 537.1,424.7 544.3,424.7 551.4,424.7 558.6,424.7 565.7,424.7 572.9,424.7 580,424.7 587.1,424.7 594.3,424.7 601.4,424.7 608.6,424.7 615.7,424.7 622.9,424.7 630,424.7 637.2,424.7 644.3,424.7 651.5,424.7 658.6,424.7 665.8,424.7 672.9,424.7 680.1,424.7 687.2,424.7 694.3,403.1 701.5,403.1 708.6,403.1 715.8,403.1 722.9,403.1 730.1,403.1 737.2,403.1 744.4,403.1 751.5,403.1 758.7,403.1 765.8,403.1 773,403.1 780.1,403.1 787.3,403.1 794.4,403.1 801.6,403.1 808.7,403.1 815.8,403.1 823,403.1 830.1,403.1 837.3,403.1 844.4,403.1 851.6,403.1 858.7,403.1 865.9,403.1 873,403.1 880.2,403.1 887.3,403.1 894.5,403.1 901.6,403.1 908.8,403.1 915.9,403.1 923,403.1 930.2,403.1 937.3,403.1 944.5,403.1 951.6,403.1 958.8,403.1 965.9,403.1 973.1,403.1 980.2,403.1 987.4,403.1 994.5,403.1 1001.7,403.1 1008.8,403.1 1016,403.1 1023.1,403.1 1030.2,403.1 1037.4,403.1 1044.5,403.1 1051.7,403.1 1058.8,403.1 1066,403.1 1073.1,403.1 1080.3,403.1 1087.4,403.1 1094.6,403.1 1101.7,403.1 1108.9,403.1 1116,403.1 1123.2,403.1 1130.3,403.1 1137.4,403.1 1144.6,403.1 1151.7,403.1 1158.9,403.1 1166,403.1 1173.2,403.1 1180.3,403.1 1187.5,403.1 1194.6,403.1 1201.8,403.1 1208.9,403.1 1216.1,403.1 1223.2,403.1 1230.4,403.1 1237.5,403.1 1244.7,403.1 1251.8,403.1 1258.9,403.1 1266.1,403.1 1273.2,403.1 1280.4,403.1 1287.5,403.1 1294.7,403.1 1301.8,403.1 1309,403.1 1316.1,403.1 1323.3,403.1 1330.4,403.1 1337.6,403.1 1344.7,403.1 1351.9,403.1 1359,403.1" fill="none" stroke="#d62728" stroke-width="2.55" stroke-linejoin="round" marker-start="url(#m6)" marker-mid="url(#m6)" marker-end="url(#m6)"/>
<polyline points="51.1,424.7 58.3,424.7 65.4,424.7 72.6,424.7 79.7,424.7 86.9,424.7 94,424.7 101.2,424.7 108.3,424.7 115.5,424.7 122.6,424.7 129.8,424.7 136.9,424.7 144,424.7 151.2,424.7 158.3,424.7 165.5,424.7 172.6,424.7 179.8,424.7 186.9,424.7 194.1,424.7 201.2,424.7 208.4,424.7 215.5,424.7 222.7,424.7 229.8,424.7 237,424.7 244.1,424.7 251.2,424.7 258.4,424.7 265.5,424.7 272.7,424.7 279.8,424.7 287,424.7 294.1,424.7 301.3,424.7 308.4,424.7 315.6,424.7 322.7,424.7 329.9,424.7 337,424.7 344.2,424.7 351.3,424.7 358.5,424.7 365.6,424.7 372.7,424.7 379.9,424.7 387,424.7 394.2,424.7 401.3,424.7 408.5,424.7 415.6,424.7 422.8,424.7 429.9,424.7 437.1,424.7 444.2,424.7 451.4,424.7 458.5,424.7 465.7,424.7 472.8,424.7 479.9,424.7 487.1,424.7 494.2,424.7 501.4,424.7 508.5,424.7 515.7,424.7 522.8,424.7 530,424.7 537.1,424.7 544.3,424.7 551.4,424.7 558.6,424.7 565.7,424.7 572.9,424.7 580,424.7 587.1,424.7 594.3,424.7 601.4,424.7 608.6,424.7 615.7,424.7 622.9,424.7 630,424.7 637.2,424.7 644.3,424.7 651.5,424.7 658.6,424.7 665.8,424.7 672.9,424.7 680.1,424.7 687.2,424.7 694.3,407 701.5,407 708.6,407 715.8,407 722.9,407 730.1,407 737.2,407 744.4,407 751.5,407 758.7,407 765.8,407 773,407 780.1,407 787.3,407 794.4,407 801.6,407 808.7,407 815.8,407 823,407 830.1,407 837.3,407 844.4,407 851.6,407 858.7,407 865.9,407 873,407 880.2,407 887.3,407 894.5,407 901.6,407 908.8,407 915.9,407 923,407 930.2,407 937.3,407 944.5,407 951.6,407 958.8,407 965.9,407 973.1,407 980.2,407 987.4,407 994.5,407 1001.7,407 1008.8,407 1016,407 1023.1,407 1030.2,407 1037.4,407 1044.5,407 1051.7,407 1058.8,407 1066,407 1073.1,407 1080.3,407 1087.4,407 1094.6,407 1101.7,407 1108.9,407 1116,407 1123.2,407 1130.3,407 1137.4,407 1144.6,407 1151.7,407 1158.9,407 1166,407 1173.2,407 1180.3,407 1187.5,407 1194.6,407 1201.8,407 1208.9,407 1216.1,407 1223.2,407 1230.4,407 1237.5,407 1244.7,407 1251.8,407 1258.9,407 1266.1,407 1273.2,407 1280.4,407 1287.5,407 1294.7,407 1301.8,407 1309,407 1316.1,407 1323.3,407 1330.4,407 1337.6,407 1344.7,407 1351.9,407 1359,407" fill="none" stroke="#98df8a" stroke-width="2.55" stroke-linejoin="round" marker-start="url(#m5)" marker-mid="url(#m5)" marker-end="url(#m5)"/>
<polyline points="51.1,424.7 58.3,424.7 65.4,424.7 72.6,424.7 79.7,424.7 86.9,424.7 94,424.7 101.2,424.7 108.3,424.7 115.5,424.7 122.6,424.7 129.8,424.7 136.9,424.7 144,424.7 151.2,424.7 158.3,424.7 165.5,424.7 172.6,424.7 179.8,424.7 186.9,424.7 194.1,424.7 201.2,424.7 208.4,424.7 215.5,424.7 222.7,424.7 229.8,424.7 237,424.7 244.1,424.7 251.2,424.7 258.4,424.7 265.5,424.7 272.7,424.7 279.8,424.7 287,424.7 294.1,424.7 301.3,424.7 308.4,424.7 315.6,424.7 322.7,424.7 329.9,424.7 337,424.7 344.2,424.7 351.3,424.7 358.5,424.7 365.6,424.7 372.7,424.7 379.9,424.7 387,424.7 394.2,424.7 401.3,424.7 408.5,424.7 415.6,424.7 422.8,424.7 429.9,424.7 437.1,424.7 444.2,424.7 451.4,424.7 458.5,424.7 465.7,424.7 472.8,424.7 479.9,424.7 487.1,424.7 494.2,424.7 501.4,424.7 508.5,424.7 515.7,424.7 522.8,424.7 530,424.7 537.1,424.7 544.3,424.7 551.4,424.7 558.6,424.7 565.7,424.7 572.9,424.7 580,424.7 587.1,503.1 594.3,503.1 601.4,503.1 608.6,503.1 615.7,503.1 622.9,503.1 630,503.1 637.2,503.1 644.3,554.1 651.5,554.1 658.6,554.1 665.8,554.1 672.9,554.1 680.1,554.1 687.2,554.1 694.3,160.9 701.5,160.9 708.6,160.9 715.8,160.9 722.9,160.9 730.1,160.9 737.2,160.9 744.4,160.9 751.5,160.9 758.7,160.9 765.8,160.9 773,160.9 780.1,160.9 787.3,160.9 794.4,160.9 801.6,160.9 808.7,160.9 815.8,160.9 823,160.9 830.1,160.9 837.3,160.9 844.4,160.9 851.6,160.9 858.7,160.9 865.9,160.9 873,160.9 880.2,160.9 887.3,160.9 894.5,160.9 901.6,160.9 908.8,160.9 915.9,160.9 923,160.9 930.2,160.9 937.3,160.9 944.5,160.9 951.6,160.9 958.8,160.9 965.9,160.9 973.1,160.9 980.2,160.9 987.4,160.9 994.5,160.9 1001.7,160.9 1008.8,160.9 1016,160.9 1023.1,160.9 1030.2,160.9 1037.4,160.9 1044.5,160.9 1051.7,160.9 1058.8,160.9 1066,160.9 1073.1,160.9 1080.3,160.9 1087.4,160.9 1094.6,160.9 1101.7,160.9 1108.9,160.9 1116,160.9 1123.2,160.9 1130.3,160.9 1137.4,160.9 1144.6,160.9 1151.7,160.9 1158.9,160.9 1166,160.9 1173.2,160.9 1180.3,160.9 1187.5,160.9 1194.6,160.9 1201.8,160.9 1208.9,160.9 1216.1,160.9 1223.2,160.9 1230.4,160.9 1237.5,160.9 1244.7,160.9 1251.8,160.9 1258.9,160.9 1266.1,160.9 1273.2,160.9 1280.4,160.9 1287.5,160.9 1294.7,160.9 1301.8,160.9 1309,160.9 1316.1,160.9 1323.3,160.9 1330.4,160.9 1337.6,160.9 1344.7,160.9 1351.9,160.9 1359,160.9" fill="none" stroke="#2ca02c" stroke-width="2.55" stroke-linejoin="round" marker-start="url(#m4)" marker-mid="url(#m4)" marker-end="url(#m4)"/>
<polyline points="51.1,424.7 58.3,424.7 65.4,424.7 72.6,424.7 79.7,424.7 86.9,424.7 94,424.7 101.2,424.7 108.3,424.7 115.5,424.7 122.6,424.7 129.8,424.7 136.9,424.7 144,424.7 151.2,424.7 158.3,424.7 165.5,424.7 172.6,424.7 179.8,424.7 186.9,424.7 194.1,424.7 201.2,424.7 208.4,424.7 215.5,424.7 222.7,424.7 229.8,424.7 237,424.7 244.1,424.7 251.2,424.7 258.4,424.7 265.5,424.7 272.7,424.7 279.8,424.7 287,424.7 294.1,424.7 301.3,424.7 308.4,424.7 315.6,424.7 322.7,424.7 329.9,424.7 337,424.7 344.2,424.7 351.3,424.7 358.5,424.7 365.6,424.7 372.7,424.7 379.9,424.7 387,424.7 394.2,424.7 401.3,424.7 408.5,424.7 415.6,424.7 422.8,424.7 429.9,424.7 437.1,424.7 444.2,424.7 451.4,424.7 458.5,424.7 465.7,424.7 472.8,424.7 479.9,424.7 487.1,424.7 494.2,424.7 501.4,424.7 508.5,424.7 515.7,424.7 522.8,424.7 530,424.7 537.1,424.7 544.3,424.7 551.4,424.7 558.6,424.7 565.7,456.1 572.9,456.1 580,456.1 587.1,456.1 594.3,456.1 601.4,456.1 608.6,463.9 615.7,463.9 622.9,463.9 630,463.9 637.2,463.9 644.3,463.9 651.5,463.9 658.6,463.9 665.8,463.9 672.9,463.9 680.1,463.9 687.2,463.9 694.3,436.5 701.5,436.5 708.6,436.5 715.8,436.5 722.9,436.5 730.1,436.5 737.2,436.5 744.4,436.5 751.5,436.5 758.7,436.5 765.8,436.5 773,436.5 780.1,436.5 787.3,436.5 794.4,436.5 801.6,436.5 808.7,436.5 815.8,436.5 823,436.5 830.1,436.5 837.3,436.5 844.4,436.5 851.6,436.5 858.7,436.5 865.9,436.5 873,436.5 880.2,436.5 887.3,436.5 894.5,436.5 901.6,436.5 908.8,436.5 915.9,436.5 923,436.5 930.2,436.5 937.3,436.5 944.5,436.5 951.6,436.5 958.8,436.5 965.9,436.5 973.1,436.5 980.2,436.5 987.4,436.5 994.5,436.5 1001.7,436.5 1008.8,436.5 1016,436.5 1023.1,436.5 1030.2,436.5 1037.4,436.5 1044.5,436.5 1051.7,436.5 1058.8,436.5 1066,436.5 1073.1,436.5 1080.3,436.5 1087.4,436.5 1094.6,436.5 1101.7,436.5 1108.9,436.5 1116,436.5 1123.2,436.5 1130.3,436.5 1137.4,436.5 1144.6,436.5 1151.7,436.5 1158.9,436.5 1166,436.5 1173.2,436.5 1180.3,436.5 1187.5,436.5 1194.6,436.5 1201.8,436.5 1208.9,436.5 1216.1,436.5 1223.2,436.5 1230.4,436.5 1237.5,436.5 1244.7,436.5 1251.8,436.5 1258.9,436.5 1266.1,436.5 1273.2,436.5 1280.4,436.5 1287.5,436.5 1294.7,436.5 1301.8,436.5 1309,436.5 1316.1,436.5 1323.3,436.5 1330.4,436.5 1337.6,436.5 1344.7,436.5 1351.9,436.5 1359,436.5" fill="none" stroke="#ffbb78" stroke-width="2.55" stroke-linejoin="round" marker-start="url(#m3)" marker-mid="url(#m3)" marker-end="url(#m3)"/>
<polyline points="51.1,424.7 58.3,424.7 65.4,424.7 72.6,424.7 79.7,424.7 86.9,424.7 94,424.7 101.2,424.7 108.3,424.7 115.5,424.7 122.6,424.7 129.8,424.7 136.9,424.7 144,424.7 151.2,424.7 158.3,424.7 165.5,424.7 172.6,424.7 179.8,424.7 186.9,424.7 194.1,424.7 201.2,424.7 208.4,424.7 215.5,424.7 222.7,424.7 229.8,424.7 237,424.7 244.1,424.7 251.2,424.7 258.4,424.7 265.5,424.7 272.7,424.7 279.8,424.7 287,424.7 294.1,424.7 301.3,424.7 308.4,424.7 315.6,424.7 322.7,424.7 329.9,424.7 337,424.7 344.2,424.7 351.3,424.7 358.5,424.7 365.6,424.7 372.7,424.7 379.9,424.7 387,424.7 394.2,424.7 401.3,424.7 408.5,424.7 415.6,424.7 422.8,424.7 429.9,424.7 437.1,424.7 444.2,424.7 451.4,424.7 458.5,424.7 465.7,424.7 472.8,424.7 479.9,424.7 487.1,424.7 494.2,424.7 501.4,424.7 508.5,424.7 515.7,424.7 522.8,424.7 530,424.7 537.1,424.7 544.3,424.7 551.4,424.7 558.6,424.7 565.7,424.7 572.9,424.7 580,424.7 587.1,424.7 594.3,424.7 601.4,424.7 608.6,424.7 615.7,424.7 622.9,424.7 630,424.7 637.2,424.7 644.3,424.7 651.5,424.7 658.6,424.7 665.8,424.7 672.9,424.7 680.1,424.7 687.2,424.7 694.3,356.1 701.5,356.1 708.6,356.1 715.8,356.1 722.9,356.1 730.1,356.1 737.2,356.1 744.4,356.1 751.5,356.1 758.7,356.1 765.8,356.1 773,356.1 780.1,356.1 787.3,356.1 794.4,356.1 801.6,356.1 808.7,356.1 815.8,356.1 823,356.1 830.1,356.1 837.3,356.1 844.4,356.1 851.6,356.1 858.7,356.1 865.9,356.1 873,356.1 880.2,356.1 887.3,356.1 894.5,356.1 901.6,356.1 908.8,356.1 915.9,356.1 923,356.1 930.2,356.1 937.3,356.1 944.5,356.1 951.6,356.1 958.8,356.1 965.9,356.1 973.1,356.1 980.2,356.1 987.4,356.1 994.5,356.1 1001.7,356.1 1008.8,356.1 1016,356.1 1023.1,356.1 1030.2,356.1 1037.4,356.1 1044.5,356.1 1051.7,356.1 1058.8,356.1 1066,356.1 1073.1,356.1 1080.3,356.1 1087.4,356.1 1094.6,356.1 1101.7,356.1 1108.9,356.1 1116,356.1 1123.2,356.1 1130.3,356.1 1137.4,356.1 1144.6,356.1 1151.7,356.1 1158.9,356.1 1166,356.1 1173.2,356.1 1180.3,356.1 1187.5,356.1 1194.6,356.1 1201.8,356.1 1208.9,356.1 1216.1,356.1 1223.2,356.1 1230.4,356.1 1237.5,356.1 1244.7,356.1 1251.8,356.1 1258.9,356.1 1266.1,356.1 1273.2,356.1 1280.4,356.1 1287.5,356.1 1294.7,356.1 1301.8,356.1 1309,356.1 1316.1,356.1 1323.3,356.1 1330.4,356.1 1337.6,356.1 1344.7,356.1 1351.9,356.1 1359,356.1" fill="none" stroke="#aec7e8" stroke-width="2.55" stroke-linejoin="round" marker-start="url(#m2)" marker-mid="url(#m2)" marker-end="url(#m2)"/>
<polyline points="51.1,424.7 58.3,424.7 65.4,424.7 72.6,424.7 79.7,424.7 86.9,424.7 94,424.7 101.2,424.7 108.3,424.7 115.5,424.7 122.6,424.7 129.8,424.7 136.9,424.7 144,424.7 151.2,424.7 158.3,424.7 165.5,424.7 172.6,424.7 179.8,424.7 186.9,424.7 194.1,424.7 201.2,424.7 208.4,424.7 215.5,424.7 222.7,424.7 229.8,424.7 237,424.7 244.1,424.7 251.2,424.7 258.4,424.7 265.5,424.7 272.7,424.7 279.8,424.7 287,424.7 294.1,424.7 301.3,424.7 308.4,424.7 315.6,424.7 322.7,424.7 329.9,424.7 337,424.7 344.2,424.7 351.3,424.7 358.5,424.7 365.6,424.7 372.7,424.7 379.9,424.7 387,424.7 394.2,424.7 401.3,424.7 408.5,424.7 415.6,424.7 422.8,424.7 429.9,424.7 437.1,424.7 444.2,424.7 451.4,424.7 458.5,424.7 465.7,424.7 472.8,424.7 479.9,424.7 487.1,424.7 494.2,424.7 501.4,424.7 508.5,424.7 515.7,424.7 522.8,424.7 530,424.7 537.1,424.7 544.3,424.7 551.4,424.7 558.6,424.7 565.7,424.7 572.9,424.7 580,424.7 587.1,424.7 594.3,424.7 601.4,424.7 608.6,424.7 615.7,424.7 622.9,424.7 630,424.7 637.2,424.7 644.3,424.7 651.5,424.7 658.6,424.7 665.8,424.7 672.9,424.7 680.1,424.7 687.2,424.7 694.3,361 701.5,361 708.6,361 715.8,361 722.9,361 730.1,361 737.2,361 744.4,361 751.5,361 758.7,361 765.8,361 773,361 780.1,361 787.3,361 794.4,361 801.6,361 808.7,361 815.8,361 823,361 830.1,361 837.3,361 844.4,361 851.6,361 858.7,361 865.9,361 873,361 880.2,361 887.3,361 894.5,361 901.6,361 908.8,361 915.9,361 923,361 930.2,361 937.3,361 944.5,361 951.6,361 958.8,361 965.9,361 973.1,361 980.2,361 987.4,361 994.5,361 1001.7,361 1008.8,361 1016,361 1023.1,361 1030.2,361 1037.4,361 1044.5,361 1051.7,361 1058.8,361 1066,361 1073.1,361 1080.3,361 1087.4,361 1094.6,361 1101.7,361 1108.9,361 1116,361 1123.2,361 1130.3,361 1137.4,361 1144.6,361 1151.7,361 1158.9,361 1166,361 1173.2,361 1180.3,361 1187.5,361 1194.6,361 1201.8,361 1208.9,361 1216.1,361 1223.2,361 1230.4,361 1237.5,361 1244.7,361 1251.8,361 1258.9,361 1266.1,361 1273.2,361 1280.4,361 1287.5,361 1294.7,361 1301.8,361 1309,361 1316.1,361 1323.3,361 1330.4,361 1337.6,361 1344.7,361 1351.9,361 1359,361" fill="none" stroke="#ff7f0e" stroke-width="2.55" stroke-linejoin="round" marker-start="url(#m1)" marker-mid="url(#m1)" marker-end="url(#m1)"/>
<polyline points="51.1,424.7 58.3,424.7 65.4,424.7 72.6,424.7 79.7,424.7 86.9,424.7 94,424.7 101.2,424.7 108.3,424.7 115.5,424.7 122.6,424.7 129.8,424.7 136.9,424.7 144,424.7 151.2,424.7 158.3,424.7 165.5,424.7 172.6,424.7 179.8,424.7 186.9,424.7 194.1,424.7 201.2,424.7 208.4,424.7 215.5,424.7 222.7,424.7 229.8,424.7 237,424.7 244.1,424.7 251.2,424.7 258.4,424.7 265.5,424.7 272.7,424.7 279.8,424.7 287,424.7 294.1,424.7 301.3,424.7 308.4,424.7 315.6,424.7 322.7,424.7 329.9,424.7 337,424.7 344.2,424.7 351.3,424.7 358.5,424.7 365.6,424.7 372.7,424.7 379.9,424.7 387,424.7 394.2,424.7 401.3,424.7 408.5,424.7 415.6,424.7 422.8,424.7 429.9,424.7 437.1,424.7 444.2,424.7 451.4,424.7 458.5,424.7 465.7,424.7 472.8,424.7 479.9,424.7 487.1,424.7 494.2,424.7 501.4,424.7 508.5,424.7 515.7,424.7 522.8,424.7 530,424.7 537.1,424.7 544.3,424.7 551.4,424.7 558.6,424.7 565.7,424.7 572.9,424.7 580,424.7 587.1,424.7 594.3,424.7 601.4,424.7 608.6,424.7 615.7,424.7 622.9,424.7 630,424.7 637.2,424.7 644.3,424.7 651.5,424.7 658.6,424.7 665.8,424.7 672.9,424.7 680.1,424.7 687.2,424.7 694.3,365.9 701.5,365.9 708.6,365.9 715.8,365.9 722.9,365.9 730.1,365.9 737.2,365.9 744.4,365.9 751.5,365.9 758.7,365.9 765.8,365.9 773,365.9 780.1,365.9 787.3,365.9 794.4,365.9 801.6,365.9 808.7,365.9 815.8,365.9 823,365.9 830.1,365.9 837.3,365.9 844.4,365.9 851.6,365.9 858.7,365.9 865.9,365.9 873,365.9 880.2,365.9 887.3,365.9 894.5,365.9 901.6,365.9 908.8,365.9 915.9,365.9 923,365.9 930.2,365.9 937.3,365.9 944.5,365.9 951.6,365.9 958.8,365.9 965.9,365.9 973.1,365.9 980.2,365.9 987.4,365.9 994.5,365.9 1001.7,365.9 1008.8,365.9 1016,365.9 1023.1,365.9 1030.2,365.9 1037.4,365.9 1044.5,365.9 1051.7,365.9 1058.8,365.9 1066,365.9 1073.1,365.9 1080.3,365.9 1087.4,365.9 1094.6,365.9 1101.7,365.9 1108.9,365.9 1116,365.9 1123.2,365.9 1130.3,365.9 1137.4,365.9 1144.6,365.9 1151.7,365.9 1158.9,365.9 1166,365.9 1173.2,365.9 1180.3,365.9 1187.5,365.9 1194.6,365.9 1201.8,365.9 1208.9,365.9 1216.1,365.9 1223.2,365.9 1230.4,365.9 1237.5,365.9 1244.7,365.9 1251.8,365.9 1258.9,365.9 1266.1,365.9 1273.2,365.9 1280.4,365.9 1287.5,365.9 1294.7,365.9 1301.8,365.9 1309,365.9 1316.1,365.9 1323.3,365.9 1330.4,365.9 1337.6,365.9 1344.7,365.9 1351.9,365.9 1359,365.9" fill="none" stroke="#1f77b4" stroke-width="2.55" stroke-linejoin="round" marker-start="url(#m0)" marker-mid="url(#m0)" marker-end="url(#m0)"/>
</svg>
<div id="band"></div>
<div id="rstrip"></div>
<div id="nav">
  <svg class="abs" style="left:8.8px;top:14px" width="15.6" height="12.2" viewBox="0 0 15.6 12.2"><g fill="#fff"><rect x="0" y="0" width="7.2" height="5.5" rx="1"/><rect x="8.4" y="0" width="7.2" height="5.5" rx="1"/><rect x="0" y="6.7" width="7.2" height="5.5" rx="1"/><rect x="8.4" y="6.7" width="7.2" height="5.5" rx="1"/></g></svg>
  <span class="t brand">Inventory</span>
  <span class="t" style="left:135.2px">Overview</span>
  <span class="t" style="left:206.7px">Operations</span>
  <span class="t" style="left:292.9px">Products</span>
  <span class="t" style="left:368px">Reporting</span>
  <span class="t" style="left:448px">Configuration</span>
  <!-- chat icon -->
  <svg class="abs" style="left:994px;top:14.400px" width="15" height="13.600" viewBox="0 0 15 13" preserveAspectRatio="none"><g fill="#fff"><path d="M5.6 0C2.5 0 0 1.8 0 4.1c0 1.3.8 2.4 2 3.2-.2.8-.7 1.5-1.300 2.100 1.300-.100 2.500-.600 3.400-1.400.5.100 1 .2 1.500.2 3.100 0 5.600-1.800 5.600-4.100S8.700 0 5.600 0z"/><path d="M12.600 9.600c1.200-.700 2-1.800 2-3.100 0-1.300-.900-2.500-2.300-3.200.1.300.1.600.1.900 0 2.900-3 5.200-6.800 5.200h-.6c1 .9 2.600 1.500 4.400 1.500.5 0 1-.1 1.500-.2.900.8 2.100 1.300 3.400 1.400-.900-.700-1.400-1.600-1.700-2.500z" opacity=".85"/></g></svg>
  <span class="badge" style="left:1004.8px;top:9.7px;width:14.8px">5</span>
  <!-- clock icon -->
  <svg class="abs" style="left:1030.8px;top:14px" width="13.2" height="13.2" viewBox="0 0 13.2 13.2"><circle cx="6.600" cy="6.800" r="5.500" fill="none" stroke="#fff" stroke-width="1.650"/><path d="M6.600 3.400v3.600H4.400" fill="none" stroke="#fff" stroke-width="1.300"/></svg>
  <span class="badge" style="left:1037.4px;top:9.8px;width:18.6px;height:12.4px;line-height:12.4px">26</span>
  <span class="t" style="left:1078.4px">My Company (San Francisco)</span>
  <!-- avatar -->
  <svg class="abs" style="left:1268px;top:7.5px" width="23" height="23" viewBox="0 0 23 23"><defs><clipPath id="av"><circle cx="11.5" cy="11.5" r="11.4"/></clipPath><filter id="avb" x="-20%" y="-20%" width="140%" height="140%"><feGaussianBlur stdDeviation="0.9"/></filter></defs><g clip-path="url(#av)"><rect width="23" height="23" fill="#9c6654"/><g filter="url(#avb)"><ellipse cx="11" cy="4.200" rx="8" ry="4.600" fill="#1f1b1c"/><rect x="15.500" y="4" width="2.500" height="7" fill="#3a2c2c"/><ellipse cx="11" cy="13" rx="4.800" ry="7.200" fill="#d9b1a8"/><ellipse cx="9.300" cy="8.300" rx="3.600" ry="2" fill="#e9dcd8"/><rect x="6" y="9" width="1.700" height="9" fill="#e8e0dc"/><ellipse cx="13.500" cy="21.500" rx="3.500" ry="3" fill="#ece8e8"/><ellipse cx="10.500" cy="11.800" rx="3.600" ry="1" fill="#8a6a60"/><ellipse cx="10.300" cy="18" rx="1.800" ry="0.700" fill="#8a5a50"/></g></g></svg>
  <span class="t" style="left:1291.7px">Mitchell Admin</span>
</div>
<div id="cp"></div>
<div class="title">Forecasted Inventory</div>
<div class="btnp"><span>Measures</span><i class="caret"></i></div>

<div class="redbox" style="left:92.6px;top:79.4px;width:92.2px;height:33.5px"></div>
<div class="abs" style="left:124px;top:82.8px;width:31.7px;height:27px;background:#e6e6e6"></div>
<!-- bar chart icon -->
<svg class="abs" style="left:102.6px;top:90.8px" width="14" height="10.4" viewBox="0 0 14 10.4"><path d="M0.900 0.300v9.200h13.100" fill="none" stroke="#777" stroke-width="0.9"/><g fill="#2b2b2b"><rect x="2.700" y="5.600" width="1.700" height="3"/><rect x="5.300" y="3" width="1.700" height="5.600"/><rect x="7.900" y="4.400" width="1.700" height="4.200"/><rect x="10.500" y="1.200" width="1.700" height="7.400"/></g></svg>
<!-- area chart icon -->
<svg class="abs" style="left:132.8px;top:90.8px" width="14.4" height="10.4" viewBox="0 0 14.400 10.400"><path d="M1 0.300v9.200h13.400" fill="none" stroke="#777" stroke-width="0.9"/><path d="M2.200 8L2.200 4.800L4.900 1.300L8.800 4.900L11.100 3.300L13.700 8Z" fill="#1e1e1e"/></svg>
<!-- pie icon -->
<svg class="abs" style="left:163.6px;top:90.200px" width="12" height="11" viewBox="0 0 12 11"><path d="M5 1.300v4.500l3.200 3.200A4.600 4.600 0 1 1 5 1.300z" fill="#222"/><path d="M6.200 0a5 5 0 0 1 5 5h-5z" fill="#222"/><path d="M6.400 6.100h4.800a5 5 0 0 1-1.500 3.300z" fill="#222"/></svg>

<div class="grp" style="left:190.4px;top:82.4px;width:58.6px;height:27.3px"></div>
<div class="div" style="left:219px;top:83px;height:26.4px"></div>
<!-- sort desc -->
<svg class="abs" style="left:199.4px;top:89.8px" width="12" height="12" viewBox="0 0 12 12"><g fill="#222"><rect x="1.900" y="0" width="1.500" height="9.500"/><path d="M0 8.600h5.300l-2.650 3.200z"/><rect x="5.800" y="0.300" width="6" height="1.500"/><rect x="5.800" y="3.300" width="4.500" height="1.500"/><rect x="5.800" y="6.300" width="3" height="1.500"/><rect x="5.800" y="9.300" width="1.600" height="1.500"/></g></svg>
<!-- sort asc -->
<svg class="abs" style="left:228.300px;top:89.800px" width="12" height="12" viewBox="0 0 12 12"><g fill="#222"><rect x="1.900" y="0" width="1.500" height="9.500"/><path d="M0 8.600h5.300l-2.650 3.200z"/><rect x="5.800" y="0.300" width="1.600" height="1.500"/><rect x="5.800" y="3.300" width="3" height="1.500"/><rect x="5.800" y="6.300" width="4.500" height="1.500"/><rect x="5.800" y="9.300" width="6" height="1.500"/></g></svg>

<div id="search"></div>
<div class="facet"><span class="ic"><svg class="abs" style="left:3.200px;top:5.200px" width="9" height="9.600" viewBox="0 0 9 9.600"><path d="M0 0h9L5.600 4.200v5.400L3.400 7.800V4.200z" fill="#fff"/></svg></span><span class="lb">Forecasted Stock</span>
<svg class="abs" style="left:114.600px;top:5.600px" width="8" height="8" viewBox="0 0 8 8"><path d="M1 1l6 6M7 1l-6 6" stroke="#555" stroke-width="2.200"/></svg></div>
<span class="ph">Search...</span>
<svg class="abs" style="left:1350.700px;top:57.800px" width="11" height="11" viewBox="0 0 11 11"><circle cx="4.400" cy="4.400" r="3.300" fill="none" stroke="#3c3c3c" stroke-width="1.500"/><path d="M6.900 6.900l3.200 3.200" stroke="#3c3c3c" stroke-width="1.800" stroke-linecap="round"/></svg>

<div class="grp" style="left:689.600px;top:83.400px;width:213.800px;height:26.400px"></div>
<div class="div" style="left:747px;top:84px;height:25.400px"></div>
<div class="div" style="left:826.500px;top:84px;height:25.400px"></div>
<div class="redbox" style="left:686.800px;top:82.800px;width:143px;height:30.200px"></div>
<svg class="abs" style="left:697.600px;top:93px" width="7" height="7.400" viewBox="0 0 9 9.600"><path d="M0 0h9L5.600 4.200v5.400L3.400 7.800V4.200z" fill="#222"/></svg>
<span class="bt" style="left:707.600px">Filters</span>
<svg class="abs" style="left:756px;top:93px" width="9" height="7.400" viewBox="0 0 9 7.400"><g fill="#333"><rect y="0" width="9" height="1.500"/><rect y="2.900" width="9" height="1.500"/><rect y="5.800" width="9" height="1.500"/></g></svg>
<span class="bt" style="left:767.800px">Group By</span>
<svg class="abs" style="left:833.800px;top:92.200px" width="8.600" height="8.200" viewBox="0 0 10 9.500"><path d="M5 0l1.500 3.200 3.500.4-2.600 2.400.7 3.500L5 7.800 1.900 9.500l.7-3.500L0 3.600l3.500-.4z" fill="#222"/></svg>
<span class="bt" style="left:845.300px">Favorites</span>

<div id="tt"><div class="tt-title">Quantity</div>
<div class="tt-row" style="top:27.00px"><span class="sq" style="background:#2ca02c"></span><span class="lb">20 Oct 2021 / Forecasted Stock / [E-COM07] Large Cabinet</span><span class="vl">269</span></div>
<div class="tt-row" style="top:45.53px"><span class="sq" style="background:#d62728"></span><span class="lb">20 Oct 2021 / Forecasted Stock / [FURN_8855] Drawer</span><span class="vl">168</span></div>
<div class="tt-row" style="top:64.06px"><span class="sq" style="background:#ff9896"></span><span class="lb">20 Oct 2021 / Forecasted Stock / [E-COM11] Cabinet with Doors</span><span class="vl">135</span></div>
<div class="tt-row" style="top:82.59px"><span class="sq" style="background:#c49c94"></span><span class="lb">20 Oct 2021 / Forecasted Stock / [FURN_7888] Desk Stand with Screen</span><span class="vl">125</span></div>
<div class="tt-row" style="top:101.12px"><span class="sq" style="background:#dbdb8d"></span><span class="lb">20 Oct 2021 / Forecasted Stock / [FURN_5555] Cable Management Box</span><span class="vl">90</span></div>
<div class="tt-row" style="top:119.65px"><span class="sq" style="background:#aec7e8"></span><span class="lb">20 Oct 2021 / Forecasted Stock / [DESK0006] Customizable Desk (Custom, Black)</span><span class="vl">70</span></div>
<div class="tt-row" style="top:138.18px"><span class="sq" style="background:#9467bd"></span><span class="lb">20 Oct 2021 / Forecasted Stock / sample prod</span><span class="vl">66</span></div>
<div class="tt-row" style="top:156.71px"><span class="sq" style="background:#ff7f0e"></span><span class="lb">20 Oct 2021 / Forecasted Stock / [DESK0005] Customizable Desk (Custom, White)</span><span class="vl">65</span></div>
<div class="tt-row" style="top:175.24px"><span class="sq" style="background:#1f77b4"></span><span class="lb">20 Oct 2021 / Forecasted Stock / [DESK0004] Customizable Desk (Aluminium, Black)</span><span class="vl">60</span></div>
<div class="tt-row" style="top:193.77px"><span class="sq" style="background:#e377c2"></span><span class="lb">20 Oct 2021 / Forecasted Stock / [FURN_0098] Customizable Desk (Aluminium, White)</span><span class="vl">55</span></div>
<div class="tt-row" style="top:212.30px"><span class="sq" style="background:#c49c94"></span><span class="lb">20 Oct 2021 / Forecasted Stock / [FURN_0097] Customizable Desk (Steel, Black)</span><span class="vl">50</span></div>
<div class="tt-row" style="top:230.83px"><span class="sq" style="background:#ff7f0e"></span><span class="lb">20 Oct 2021 / Forecasted Stock / [FURN_7023] Wood Panel</span><span class="vl">46</span></div>
<div class="tt-row" style="top:249.36px"><span class="sq" style="background:#8c564b"></span><span class="lb">20 Oct 2021 / Forecasted Stock / [FURN_0096] Customizable Desk (Steel, White)</span><span class="vl">40</span></div>
<div class="tt-row" style="top:267.89px"><span class="sq" style="background:#bcbd22"></span><span class="lb">20 Oct 2021 / Forecasted Stock / [FURN_2100] Drawer Black</span><span class="vl">36</span></div>
<div class="tt-row" style="top:286.42px"><span class="sq" style="background:#17becf"></span><span class="lb">20 Oct 2021 / Forecasted Stock / [FURN_5623] Drawer Case Black</span><span class="vl">36</span></div>
<div class="tt-row" style="top:304.95px"><span class="sq" style="background:#8c564b"></span><span class="lb">20 Oct 2021 / Forecasted Stock / [FURN_7777] Office Chair</span><span class="vl">35</span></div>
<div class="tt-row" style="top:323.48px"><span class="sq" style="background:#2ca02c"></span><span class="lb">20 Oct 2021 / Forecasted Stock / [FURN_8111] Wear Layer</span><span class="vl">30</span></div>
<div class="tt-row" style="top:342.01px"><span class="sq" style="background:#c5b0d5"></span><span class="lb">20 Oct 2021 / Forecasted Stock / [E-COM13] Conference Chair (Aluminium)</span><span class="vl">27</span></div>
<div class="tt-row" style="top:360.54px"><span class="sq" style="background:#9467bd"></span><span class="lb">20 Oct 2021 / Forecasted Stock / [E-COM12] Conference Chair (Steel)</span><span class="vl">25</span></div>
<div class="tt-row" style="top:379.07px"><span class="sq" style="background:#d62728"></span><span class="lb">20 Oct 2021 / Forecasted Stock / [E-COM10] Pedal Bin</span><span class="vl">22</span></div>
<div class="tt-row" style="top:397.60px"><span class="sq" style="background:#aec7e8"></span><span class="lb">20 Oct 2021 / Forecasted Stock / [FURN_7111] Ply Layer</span><span class="vl">20</span></div>
<div class="tt-row" style="top:416.13px"><span class="sq" style="background:#98df8a"></span><span class="lb">20 Oct 2021 / Forecasted Stock / [E-COM08] Storage Box</span><span class="vl">18</span></div>
<div class="tt-row" style="top:434.66px"><span class="sq" style="background:#7f7f7f"></span><span class="lb">20 Oct 2021 / Forecasted Stock / [FURN_0789] Individual Workplace</span><span class="vl">16</span></div>
<div class="tt-row" style="top:453.19px"><span class="sq" style="background:#9edae5"></span><span class="lb">20 Oct 2021 / Forecasted Stock / [FURN_6666] Acoustic Bloc Screens</span><span class="vl">11</span></div>
<div class="tt-row" style="top:471.72px"><span class="sq" style="background:#1f77b4"></span><span class="lb">20 Oct 2021 / Forecasted Stock / [FURN_6741] Large Meeting Table</span><span class="vl">8</span></div>
<div class="tt-more">...</div></div>
</body>
</html>
